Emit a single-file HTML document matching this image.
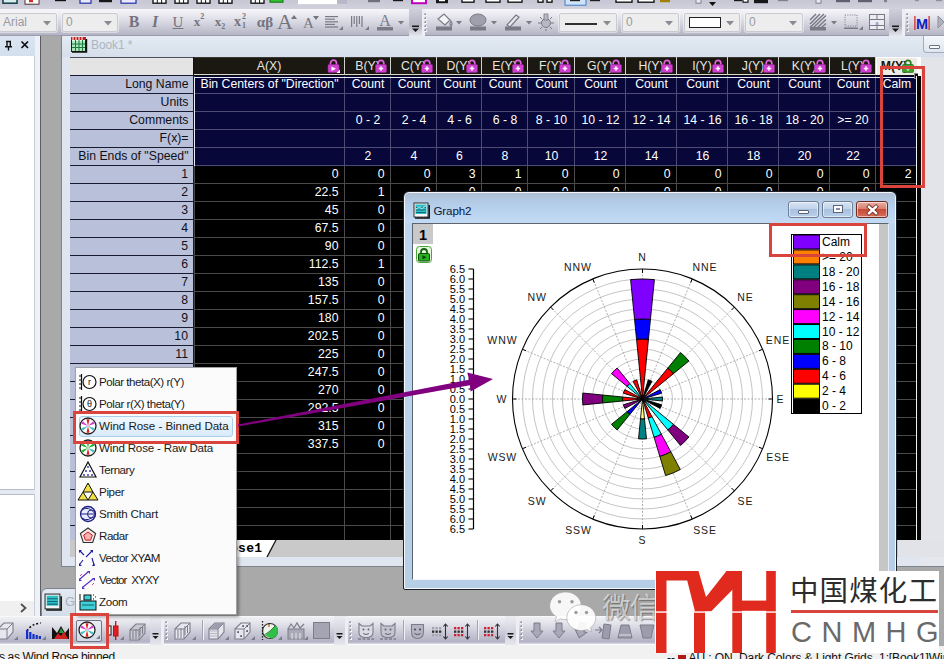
<!DOCTYPE html>
<html lang="en"><head><meta charset="utf-8"><title>Wind Rose</title>
<style>
html,body{margin:0;padding:0;}
body{width:944px;height:659px;overflow:hidden;background:#a9a9a9;font-family:"Liberation Sans",sans-serif;}
#root{position:relative;width:944px;height:659px;overflow:hidden;background:#a9a9a9;}
.abs{position:absolute;}
.abs, #root div, #root span{box-sizing:border-box;}
#root div{position:absolute;}
svg{position:absolute;overflow:visible;}
/* worksheet */
.ws{font-family:"Liberation Sans",sans-serif;font-size:12.250px;line-height:18px;white-space:nowrap;}
.rh{line-height:16.600px;background:#b9c0da;color:#101018;text-align:right;padding-right:5px;border-bottom:1px solid #1a1a30;height:18px;left:70px;width:123px;}
.cell{height:18px;line-height:16.600px;color:#fff;}
.menu-item{font-size:12px;color:#1a1a1a;white-space:nowrap;height:22px;line-height:22px;left:99px;letter-spacing:0.1px;}

</style></head>
<body>
<div id="root">
<!-- top toolbars -->
<div style="left:0;top:0;width:944px;height:9px;background:linear-gradient(#c6c6d4,#d2d2de);"></div>
<div style="left:0;top:9px;width:944px;height:27px;background:linear-gradient(#f4f4f8 0%,#e6e6ee 25%,#d0d0dc 60%,#b4b4c4 100%);border-top:1px solid #f6f6fa;border-bottom:1px solid #9c9cac;"></div>
<svg style="left:0;top:0" width="944" height="10" viewBox="0 0 944 10"><rect x="3" y="-2" width="14" height="5.2" fill="#d8ecec" stroke="#103c48" stroke-width="1.5"/><rect x="25" y="-2" width="14" height="6.2" fill="#ffffff" stroke="#503030" stroke-width="1"/><rect x="29" y="-2" width="4" height="4.2" fill="#d03020"/><rect x="55" y="-2" width="11" height="3.2" fill="#101010"/><rect x="80" y="-2" width="11" height="5.2" fill="#e8e8ff" stroke="#2030a0" stroke-width="1.2"/><rect x="99" y="-2" width="13" height="4.2" fill="#181818"/><rect x="121" y="-2" width="15" height="5.2" fill="#e8e8ff" stroke="#2030a0" stroke-width="1.2"/><rect x="153" y="-2" width="13" height="5.2" fill="#ffffff" stroke="#181818" stroke-width="1.4"/><path d="M157.3 0V3M161.6 0V3" stroke="#181818" stroke-width="1"/><rect x="175" y="-2" width="13" height="5.2" fill="#ffffff" stroke="#181818" stroke-width="1.4"/><path d="M179.3 0V3M183.6 0V3" stroke="#181818" stroke-width="1"/><rect x="197" y="-2" width="13" height="5.2" fill="#ffffff" stroke="#181818" stroke-width="1.4"/><path d="M201.3 0V3M205.6 0V3" stroke="#181818" stroke-width="1"/><rect x="219" y="-2" width="13" height="5.2" fill="#ffffff" stroke="#181818" stroke-width="1.4"/><path d="M223.3 0V3M227.6 0V3" stroke="#181818" stroke-width="1"/><rect x="251" y="-2" width="13" height="5.2" fill="#ffffff" stroke="#181818" stroke-width="1.4"/><path d="M255.3 0V3M259.6 0V3" stroke="#181818" stroke-width="1"/><rect x="270" y="-2" width="13" height="4.2" fill="#30c030" stroke="#107010" stroke-width="1"/><rect x="298" y="-2" width="48" height="6.2" fill="#ffffff"/><rect x="337" y="-2" width="10" height="6.2" fill="#b8b8c8"/><rect x="368" y="-2" width="12" height="4.2" fill="#707078"/><rect x="393" y="-2" width="10" height="3.2" fill="#181818"/><rect x="412" y="-2" width="14" height="5.2" fill="#ffffff" stroke="#c000c0" stroke-width="2"/><rect x="436" y="-2" width="12" height="5.2" fill="#181818"/><rect x="439" y="-2" width="6" height="3.2" fill="#ffffff"/><rect x="462" y="-2" width="12" height="4.2" fill="#ffffff" stroke="#181818" stroke-width="1.4"/><rect x="486" y="-2" width="14" height="4.2" fill="#ffffff" stroke="#181818" stroke-width="1.4"/><rect x="508" y="-2" width="14" height="4.2" fill="#ffffff" stroke="#181818" stroke-width="1.4"/><rect x="538" y="-2" width="5" height="4.2" fill="#ffffff" stroke="#181818" stroke-width="1.4"/><rect x="547" y="-2" width="5" height="4.2" fill="#ffffff" stroke="#181818" stroke-width="1.4"/><rect x="565" y="-2" width="21" height="7.2" fill="#cfe4f8" stroke="#3c7cd0" stroke-width="1"/><rect x="570" y="-2" width="10" height="3.2" fill="#202020"/><rect x="590" y="-2" width="10" height="3.2" fill="#202020"/><rect x="616" y="-2" width="16" height="4.2" fill="#ffffff" stroke="#181818" stroke-width="1.4"/><rect x="638" y="-2" width="16" height="4.2" fill="#ffffff" stroke="#181818" stroke-width="1.4"/><rect x="660" y="-2" width="10" height="4.2" fill="#a08000"/><rect x="696" y="-2" width="5" height="5.2" fill="#e8e8f0" stroke="#808090" stroke-width="1"/><path d="M709 2h7l-3.5 4z" fill="#101010"/><rect x="734" y="-2" width="8" height="3.2" fill="#181818"/><rect x="743" y="-2" width="5" height="4.2" fill="#ffffff" stroke="#181818" stroke-width="1.2"/><rect x="754" y="-2" width="14" height="5.2" fill="#181818"/><rect x="778" y="-2" width="10" height="3.2" fill="#808090"/><rect x="816" y="-2" width="5" height="5.2" fill="#e8e8f0" stroke="#808090" stroke-width="1"/><rect x="836" y="-2" width="14" height="4.2" fill="#606070"/><rect x="858" y="-2" width="14" height="4.2" fill="#606070"/><rect x="884" y="-2" width="3" height="4.2" fill="#808090"/><rect x="915" y="-2" width="4" height="3.2" fill="#909098"/><rect x="936" y="-2" width="6" height="3.2" fill="#909098"/></svg>
<div style="left:-1px;top:13px;width:58px;height:19px;background:#ededed;border:1px solid #c9c9d2;border-radius:2px;box-shadow:0 0 0 1px rgba(255,255,255,.45);"><span style="position:absolute;left:3px;top:1px;font-size:12px;line-height:15px;color:#9a9aa0;">Arial</span><svg style="right:5px;top:7px" width="8" height="5" viewBox="0 0 8 5"><path d="M0 0h8l-4 4.5z" fill="#8a8a92"/></svg></div>
<div style="left:62px;top:13px;width:56px;height:19px;background:#ededed;border:1px solid #c9c9d2;border-radius:2px;box-shadow:0 0 0 1px rgba(255,255,255,.45);"><span style="position:absolute;left:3px;top:1px;font-size:12px;line-height:15px;color:#9a9aa0;">0</span><svg style="right:5px;top:7px" width="8" height="5" viewBox="0 0 8 5"><path d="M0 0h8l-4 4.5z" fill="#8a8a92"/></svg></div>
<div style="left:559px;top:13px;width:58px;height:19px;background:#ededed;border:1px solid #c9c9d2;border-radius:2px;box-shadow:0 0 0 1px rgba(255,255,255,.45);"><div style="left:5px;top:9px;width:32px;height:1.500px;background:#303030;"></div><svg style="right:5px;top:7px" width="8" height="5" viewBox="0 0 8 5"><path d="M0 0h8l-4 4.5z" fill="#8a8a92"/></svg></div>
<div style="left:622px;top:13px;width:57px;height:19px;background:#ededed;border:1px solid #c9c9d2;border-radius:2px;box-shadow:0 0 0 1px rgba(255,255,255,.45);"><span style="position:absolute;left:3px;top:1px;font-size:12px;line-height:15px;color:#9a9aa0;">0</span><svg style="right:5px;top:7px" width="8" height="5" viewBox="0 0 8 5"><path d="M0 0h8l-4 4.5z" fill="#8a8a92"/></svg></div>
<div style="left:684px;top:13px;width:56px;height:19px;background:#ededed;border:1px solid #c9c9d2;border-radius:2px;box-shadow:0 0 0 1px rgba(255,255,255,.45);"><div style="left:4px;top:3px;width:32px;height:11px;border:1.500px solid #202020;background:#fff;"></div><svg style="right:5px;top:7px" width="8" height="5" viewBox="0 0 8 5"><path d="M0 0h8l-4 4.5z" fill="#8a8a92"/></svg></div>
<div style="left:745px;top:13px;width:58px;height:19px;background:#ededed;border:1px solid #c9c9d2;border-radius:2px;box-shadow:0 0 0 1px rgba(255,255,255,.45);"><span style="position:absolute;left:3px;top:1px;font-size:12px;line-height:15px;color:#9a9aa0;">0</span><svg style="right:5px;top:7px" width="8" height="5" viewBox="0 0 8 5"><path d="M0 0h8l-4 4.5z" fill="#8a8a92"/></svg></div>
<div style="left:122px;top:11px;width:24px;height:22px;text-align:center;line-height:22px;color:#74747e;font-family:'Liberation Serif',serif;font-weight:bold;font-size:16px;">B</div>
<div style="left:143px;top:11px;width:24px;height:22px;text-align:center;line-height:22px;color:#74747e;font-family:'Liberation Serif',serif;font-weight:bold;font-style:italic;font-size:16px;">I</div>
<div style="left:166px;top:11px;width:24px;height:22px;text-align:center;line-height:22px;color:#74747e;font-family:'Liberation Serif',serif;font-size:15px;text-decoration:underline;">U</div>
<div style="left:187px;top:11px;width:24px;height:22px;text-align:center;line-height:22px;color:#74747e;font-family:'Liberation Serif',serif;font-weight:bold;font-size:13px;">x<sup style="font-size:8px;vertical-align:7px;line-height:0">2</sup></div>
<div style="left:208px;top:11px;width:24px;height:22px;text-align:center;line-height:22px;color:#74747e;font-family:'Liberation Serif',serif;font-weight:bold;font-size:13px;">x<sub style="font-size:8px;vertical-align:-3px;line-height:0">2</sub></div>
<div style="left:234px;top:11px;width:20px;height:22px;line-height:22px;color:#74747e;font-family:'Liberation Serif',serif;font-weight:bold;font-size:14px;">x<span style="position:absolute;left:8px;top:-5px;font-size:8px;">2</span><span style="position:absolute;left:8px;top:4px;font-size:8px;">1</span></div>
<div style="left:253px;top:11px;width:24px;height:22px;text-align:center;line-height:22px;color:#74747e;font-family:'Liberation Serif',serif;font-weight:bold;font-size:15px;">αβ</div>
<div style="left:277px;top:9px;width:22px;height:24px;line-height:26px;color:#74747e;font-family:'Liberation Serif',serif;font-size:22px;">A<svg style="left:14px;top:6px" width="6" height="4" viewBox="0 0 6 4"><path d="M0 4h6l-3-4z" fill="#74747e"/></svg></div>
<div style="left:303px;top:11px;width:18px;height:22px;line-height:24px;color:#74747e;font-family:'Liberation Serif',serif;font-size:15px;">A<svg style="left:10px;top:5px" width="6" height="4" viewBox="0 0 6 4"><path d="M0 0h6l-3 4z" fill="#74747e"/></svg></div>
<svg style="left:0;top:9px" width="944" height="27" viewBox="0 9 944 27"><rect x="325" y="16.0" width="13" height="1.2" fill="#7a7a86"/><rect x="325" y="18.6" width="10" height="1.2" fill="#7a7a86"/><rect x="325" y="21.2" width="13" height="1.2" fill="#7a7a86"/><rect x="325" y="23.8" width="10" height="1.2" fill="#7a7a86"/><rect x="325" y="26.4" width="13" height="1.2" fill="#7a7a86"/><path d="M343 30h-4l4-4z" fill="#7a7a86"/><rect x="351.0" y="16" width="1.2" height="11" fill="#7a7a86"/><rect x="353.6" y="16" width="1.2" height="8" fill="#7a7a86"/><rect x="356.2" y="16" width="1.2" height="11" fill="#7a7a86"/><rect x="358.8" y="16" width="1.2" height="8" fill="#7a7a86"/><rect x="361.4" y="16" width="1.2" height="11" fill="#7a7a86"/><path d="M369 30h-4l4-4z" fill="#7a7a86"/><text x="385" y="26" font-family="Liberation Serif,serif" font-size="16" text-anchor="middle" fill="#7a7a86">A</text><rect x="377" y="27" width="16" height="3.5" fill="#7a7a86"/><path d="M398 21h6l-3 3.5z" fill="#7a7a86"/><defs><linearGradient id="capg" x1="0" y1="0" x2="0" y2="1"><stop offset="0" stop-color="#cfcfdc"/><stop offset=".6" stop-color="#b2b2c2"/><stop offset="1" stop-color="#e6e6ee"/></linearGradient></defs><path d="M409 9h13v27h-9q-4 0-4-5z" fill="#c4c4d2" opacity=".0"/><rect x="409" y="9" width="13" height="27" fill="url(#capg)"/><rect x="422" y="9" width="3" height="27" fill="#eeeef4"/><rect x="412" y="25.5" width="7" height="1.6" fill="#181818"/><path d="M412 28.5h7l-3.5 3.5z" fill="#181818"/><path d="M889 9h13v27h-9q-4 0-4-5z" fill="#c4c4d2" opacity=".0"/><rect x="889" y="9" width="13" height="27" fill="url(#capg)"/><rect x="902" y="9" width="3" height="27" fill="#eeeef4"/><rect x="892" y="25.5" width="7" height="1.6" fill="#181818"/><path d="M892 28.5h7l-3.5 3.5z" fill="#181818"/><rect x="425" y="14" width="2" height="2" fill="#f4f4f8"/><rect x="424.4" y="13.4" width="1.6" height="1.6" fill="#8c8c9c"/><rect x="425" y="18" width="2" height="2" fill="#f4f4f8"/><rect x="424.4" y="17.4" width="1.6" height="1.6" fill="#8c8c9c"/><rect x="425" y="22" width="2" height="2" fill="#f4f4f8"/><rect x="424.4" y="21.4" width="1.6" height="1.6" fill="#8c8c9c"/><rect x="425" y="26" width="2" height="2" fill="#f4f4f8"/><rect x="424.4" y="25.4" width="1.6" height="1.6" fill="#8c8c9c"/><rect x="425" y="30" width="2" height="2" fill="#f4f4f8"/><rect x="424.4" y="29.4" width="1.6" height="1.6" fill="#8c8c9c"/><rect x="907" y="14" width="2" height="2" fill="#f4f4f8"/><rect x="906.4" y="13.4" width="1.6" height="1.6" fill="#8c8c9c"/><rect x="907" y="18" width="2" height="2" fill="#f4f4f8"/><rect x="906.4" y="17.4" width="1.6" height="1.6" fill="#8c8c9c"/><rect x="907" y="22" width="2" height="2" fill="#f4f4f8"/><rect x="906.4" y="21.4" width="1.6" height="1.6" fill="#8c8c9c"/><rect x="907" y="26" width="2" height="2" fill="#f4f4f8"/><rect x="906.4" y="25.4" width="1.6" height="1.6" fill="#8c8c9c"/><rect x="907" y="30" width="2" height="2" fill="#f4f4f8"/><rect x="906.4" y="29.4" width="1.6" height="1.6" fill="#8c8c9c"/><path d="M438 19l6-5 6 6-5 5zM451 21q2 3 0 5q-2-2 0-5z" fill="#f4f4f8" stroke="#7a7a86" stroke-width="1.2"/><rect x="436" y="26.5" width="16" height="4" fill="#7a7a86"/><path d="M456 21h6l-3 3.5z" fill="#7a7a86"/><ellipse cx="478" cy="20" rx="8" ry="6" fill="#a0a0ac" stroke="#7a7a86"/><rect x="470" y="26.5" width="16" height="4" fill="#7a7a86"/><path d="M491 21h6l-3 3.5z" fill="#7a7a86"/><path d="M507 25l9-10 3 2-9 10z" fill="#e8e8ee" stroke="#7a7a86" stroke-width="1.2"/><rect x="505" y="26.5" width="16" height="4" fill="#7a7a86"/><path d="M526 21h6l-3 3.5z" fill="#7a7a86"/><circle cx="546" cy="23" r="4.5" fill="#b8b8c4" stroke="#7a7a86"/><rect x="544" y="14" width="4" height="6" fill="#b8b8c4" stroke="#7a7a86" stroke-width=".8"/><path d="M538 23h3M551 23h3M540 17l2 2M552 17l-2 2M540 29l2-2M552 29l-2-2M546 29v2" stroke="#7a7a86" stroke-width="1"/><g stroke="#7a7a86" stroke-width="1.500"><path d="M810 20l6-6M810 24l10-10M810 27.500l14-13.500M813.500 27.500l12.500-12M817.500 27.500l8.500-8M821.500 27.500l4.500-4"/></g><rect x="810" y="27" width="16" height="3.5" fill="#7a7a86"/><path d="M831 21h6l-3 3.5z" fill="#7a7a86"/><rect x="845" y="15" width="12" height="11" fill="none" stroke="#7a7a86" stroke-dasharray="1 1.4"/><rect x="844" y="27.5" width="14" height="1.5" fill="#7a7a86"/><path d="M863 30h-4l4-4z" fill="#7a7a86"/><rect x="869.5" y="14.5" width="15" height="15" fill="#ececf2" stroke="#7a7a86"/><path d="M869 19.5h16M869 25.500h16M877 14v5M877 26v4" stroke="#7a7a86"/><text x="877" y="25" font-size="6" text-anchor="middle" fill="#7a7a86" font-family="Liberation Sans,sans-serif">a</text><text x="922" y="29" font-family="Liberation Sans,sans-serif" font-weight="bold" font-size="14.500" text-anchor="middle" fill="#1020c0">M</text><rect x="914.300" y="16" width="1.2" height="14" fill="#d02020"/><rect x="928.5" y="16" width="1.2" height="14" fill="#d02020"/><path d="M938 16l6 6-6 6z" fill="#b0b0bc" stroke="#9090a0"/></svg>
<!-- left panel -->
<div style="left:0;top:36px;width:41px;height:581px;background:#e4e9f2;"></div>
<div style="left:0;top:36px;width:36px;height:21px;background:linear-gradient(#dbe5f1,#d3dfee);"></div>
<div style="left:35px;top:36px;width:6px;height:581px;background:#eff1f8;border-right:1px solid #5c5c60;"></div>
<svg style="left:0;top:36px" width="36" height="20" viewBox="0 0 36 20"><path d="M6 5.500h5M7 5.500v5M10.300 5.500v5.500M5 10.700h7M8.500 11v3.500" stroke="#101010" stroke-width="1.400" fill="none"/><path d="M21.500 5.500l6.500 6.500M28 5.500l-6.500 6.500" stroke="#101010" stroke-width="1.700"/></svg>
<div style="left:0;top:56px;width:35px;height:434px;background:#ffffff;border-right:1px solid #c8ccd6;border-bottom:1px solid #b8bcc8;"></div>
<div style="left:0;top:494px;width:35px;height:107px;background:#ffffff;border-right:1px solid #c8ccd6;border-top:1px solid #b8bcc8;"></div>
<div style="left:0;top:601px;width:35px;height:16px;background:#f0f0f0;border-right:1px solid #c8ccd6;"></div>
<svg style="left:19px;top:602px" width="10" height="12" viewBox="0 0 10 12"><path d="M2 2l4.500 4-4.500 4" stroke="#505050" stroke-width="1.800" fill="none"/></svg>
<!-- Book1 window -->
<div style="left:61px;top:36px;width:890px;height:531px;background:#dfe6ef;border:1px solid #7c8490;border-top:none;"></div>
<div style="left:62px;top:36px;width:882px;height:21px;background:linear-gradient(#e4ebf3,#d5deea);"></div>
<svg style="left:70px;top:36px" width="17" height="17" viewBox="0 0 17 17"><rect x="1.5" y="1.5" width="14" height="14" fill="#e8fff0" stroke="#202020"/><rect x="1" y="1" width="15" height="3" fill="#c02020"/><path d="M3 1v3M6 1v3M9 1v3M12 1v3" stroke="#fff" stroke-width="1"/><rect x="2" y="5" width="13" height="10" fill="#a8e8b8"/><path d="M2 8h13M2 11.500h13M5.500 4v11M9 4v11M12.500 4v11" stroke="#207840" stroke-width="1"/><path d="M2 16h14.500V3" stroke="#101010" stroke-width="1.400" fill="none"/></svg>
<div style="left:91px;top:37px;font-size:12px;line-height:16px;color:#adb5c0;letter-spacing:-.1px;">Book1 *</div>
<div style="left:923px;top:36px;width:24px;height:17px;background:linear-gradient(#f4f7fb,#dfe6ef);border:1px solid #a4acb8;border-top:none;border-radius:0 0 0 4px;"></div>
<div style="left:929px;top:45px;width:11px;height:4px;background:#fafcfe;border:1px solid #6c7480;border-radius:1px;"></div>
<div class="ws" style="left:70px;top:57px;width:851px;height:483px;background:#000;overflow:hidden;">
<div style="left:124px;top:19px;width:724px;height:90px;background:#07073a;"></div>
<div style="left:0;top:0;width:124px;height:19px;background:#e4e4e4;border-bottom:1px solid #1a1a30;border-top:1px solid #50505c;"></div>
<div style="left:124px;top:0;width:724px;height:18px;background:#1b1711;border-bottom:1px solid #d8d8d0;border-top:1px solid #3a3630;"></div>
<div style="left:124px;top:0;width:151px;height:19px;line-height:19px;color:#e8e6e0;border-right:1px solid #d0d0d0;text-align:center;">A(X)<svg style="right:4px;top:2px" width="13" height="14" viewBox="0 0 13 14"><path d="M3.500 6V4.200a3 3 0 0 1 6 0V6" fill="none" stroke="#e060e0" stroke-width="1.700"/><rect x="1" y="5.500" width="11" height="8" rx="1" fill="#d040d0" stroke="#902890" stroke-width=".6"/><path d="M4.500 7.500l4.500 2.200-4.500 2.200z" fill="#fff"/><path d="M13 14h-3.500l3.500-3.500z" fill="#fff"/></svg></div>
<div style="left:275px;top:0;width:46px;height:19px;line-height:19px;color:#e8e6e0;border-right:1px solid #d0d0d0;text-align:center;">B(Y)<svg style="right:3px;top:2px" width="12" height="14" viewBox="0 0 12 14"><path d="M3.200 6V4.200a2.800 2.800 0 0 1 5.600 0V6" fill="none" stroke="#e060e0" stroke-width="1.700"/><rect x=".5" y="5.500" width="11" height="8" rx="1" fill="#d040d0" stroke="#902890" stroke-width=".6"/><path d="M6 7.300v4.400M3.800 9.500h4.400" stroke="#fff" stroke-width="1.400"/></svg></div>
<div style="left:321px;top:0;width:46px;height:19px;line-height:19px;color:#e8e6e0;border-right:1px solid #d0d0d0;text-align:center;">C(Y)<svg style="right:3px;top:2px" width="12" height="14" viewBox="0 0 12 14"><path d="M3.200 6V4.200a2.800 2.800 0 0 1 5.600 0V6" fill="none" stroke="#e060e0" stroke-width="1.700"/><rect x=".5" y="5.500" width="11" height="8" rx="1" fill="#d040d0" stroke="#902890" stroke-width=".6"/><path d="M6 7.300v4.400M3.800 9.500h4.400" stroke="#fff" stroke-width="1.400"/></svg></div>
<div style="left:367px;top:0;width:45px;height:19px;line-height:19px;color:#e8e6e0;border-right:1px solid #d0d0d0;text-align:center;">D(Y)<svg style="right:3px;top:2px" width="12" height="14" viewBox="0 0 12 14"><path d="M3.200 6V4.200a2.800 2.800 0 0 1 5.600 0V6" fill="none" stroke="#e060e0" stroke-width="1.700"/><rect x=".5" y="5.500" width="11" height="8" rx="1" fill="#d040d0" stroke="#902890" stroke-width=".6"/><path d="M6 7.300v4.400M3.800 9.500h4.400" stroke="#fff" stroke-width="1.400"/></svg></div>
<div style="left:412px;top:0;width:46px;height:19px;line-height:19px;color:#e8e6e0;border-right:1px solid #d0d0d0;text-align:center;">E(Y)<svg style="right:3px;top:2px" width="12" height="14" viewBox="0 0 12 14"><path d="M3.200 6V4.200a2.800 2.800 0 0 1 5.600 0V6" fill="none" stroke="#e060e0" stroke-width="1.700"/><rect x=".5" y="5.500" width="11" height="8" rx="1" fill="#d040d0" stroke="#902890" stroke-width=".6"/><path d="M6 7.300v4.400M3.800 9.500h4.400" stroke="#fff" stroke-width="1.400"/></svg></div>
<div style="left:458px;top:0;width:47px;height:19px;line-height:19px;color:#e8e6e0;border-right:1px solid #d0d0d0;text-align:center;">F(Y)<svg style="right:3px;top:2px" width="12" height="14" viewBox="0 0 12 14"><path d="M3.200 6V4.200a2.800 2.800 0 0 1 5.600 0V6" fill="none" stroke="#e060e0" stroke-width="1.700"/><rect x=".5" y="5.500" width="11" height="8" rx="1" fill="#d040d0" stroke="#902890" stroke-width=".6"/><path d="M6 7.300v4.400M3.800 9.500h4.400" stroke="#fff" stroke-width="1.400"/></svg></div>
<div style="left:505px;top:0;width:51px;height:19px;line-height:19px;color:#e8e6e0;border-right:1px solid #d0d0d0;text-align:center;">G(Y)<svg style="right:3px;top:2px" width="12" height="14" viewBox="0 0 12 14"><path d="M3.200 6V4.200a2.800 2.800 0 0 1 5.600 0V6" fill="none" stroke="#e060e0" stroke-width="1.700"/><rect x=".5" y="5.500" width="11" height="8" rx="1" fill="#d040d0" stroke="#902890" stroke-width=".6"/><path d="M6 7.300v4.400M3.800 9.500h4.400" stroke="#fff" stroke-width="1.400"/></svg></div>
<div style="left:556px;top:0;width:51px;height:19px;line-height:19px;color:#e8e6e0;border-right:1px solid #d0d0d0;text-align:center;">H(Y)<svg style="right:3px;top:2px" width="12" height="14" viewBox="0 0 12 14"><path d="M3.200 6V4.200a2.800 2.800 0 0 1 5.600 0V6" fill="none" stroke="#e060e0" stroke-width="1.700"/><rect x=".5" y="5.500" width="11" height="8" rx="1" fill="#d040d0" stroke="#902890" stroke-width=".6"/><path d="M6 7.300v4.400M3.800 9.500h4.400" stroke="#fff" stroke-width="1.400"/></svg></div>
<div style="left:607px;top:0;width:51px;height:19px;line-height:19px;color:#e8e6e0;border-right:1px solid #d0d0d0;text-align:center;">I(Y)<svg style="right:3px;top:2px" width="12" height="14" viewBox="0 0 12 14"><path d="M3.200 6V4.200a2.800 2.800 0 0 1 5.600 0V6" fill="none" stroke="#e060e0" stroke-width="1.700"/><rect x=".5" y="5.500" width="11" height="8" rx="1" fill="#d040d0" stroke="#902890" stroke-width=".6"/><path d="M6 7.300v4.400M3.800 9.500h4.400" stroke="#fff" stroke-width="1.400"/></svg></div>
<div style="left:658px;top:0;width:51px;height:19px;line-height:19px;color:#e8e6e0;border-right:1px solid #d0d0d0;text-align:center;">J(Y)<svg style="right:3px;top:2px" width="12" height="14" viewBox="0 0 12 14"><path d="M3.200 6V4.200a2.800 2.800 0 0 1 5.600 0V6" fill="none" stroke="#e060e0" stroke-width="1.700"/><rect x=".5" y="5.500" width="11" height="8" rx="1" fill="#d040d0" stroke="#902890" stroke-width=".6"/><path d="M6 7.300v4.400M3.800 9.500h4.400" stroke="#fff" stroke-width="1.400"/></svg></div>
<div style="left:709px;top:0;width:51px;height:19px;line-height:19px;color:#e8e6e0;border-right:1px solid #d0d0d0;text-align:center;">K(Y)<svg style="right:3px;top:2px" width="12" height="14" viewBox="0 0 12 14"><path d="M3.200 6V4.200a2.800 2.800 0 0 1 5.600 0V6" fill="none" stroke="#e060e0" stroke-width="1.700"/><rect x=".5" y="5.500" width="11" height="8" rx="1" fill="#d040d0" stroke="#902890" stroke-width=".6"/><path d="M6 7.300v4.400M3.800 9.500h4.400" stroke="#fff" stroke-width="1.400"/></svg></div>
<div style="left:760px;top:0;width:46px;height:19px;line-height:19px;color:#e8e6e0;border-right:1px solid #d0d0d0;text-align:center;">L(Y)<svg style="right:3px;top:2px" width="12" height="14" viewBox="0 0 12 14"><path d="M3.200 6V4.200a2.800 2.800 0 0 1 5.600 0V6" fill="none" stroke="#e060e0" stroke-width="1.700"/><rect x=".5" y="5.500" width="11" height="8" rx="1" fill="#d040d0" stroke="#902890" stroke-width=".6"/><path d="M6 7.300v4.400M3.800 9.500h4.400" stroke="#fff" stroke-width="1.400"/></svg></div>
<div style="left:806px;top:0;width:42px;height:19px;line-height:19px;background:#ecebe4;border:1px solid #fff;color:#1b1711;font-weight:bold;text-align:center;"><span style="position:relative;top:-1px;left:-3px;">M(Y)</span><svg style="right:3px;top:1px" width="12" height="14" viewBox="0 0 12 14"><path d="M3.200 6V4.200a2.800 2.800 0 0 1 5.600 0V6" fill="none" stroke="#2c7c20" stroke-width="1.700"/><rect x=".5" y="5.500" width="11" height="8" rx="1" fill="#3aa028" stroke="#1c5c10" stroke-width=".6"/><path d="M6 7.300v4.400M3.800 9.500h4.400" stroke="#d8f0d0" stroke-width="1.400"/></svg></div>
<div class="rh" style="left:0;top:19px;width:124px;padding-right:5.5px;">Long Name</div>
<div class="rh" style="left:0;top:37px;width:124px;padding-right:5.5px;">Units</div>
<div class="rh" style="left:0;top:55px;width:124px;padding-right:5.5px;">Comments</div>
<div class="rh" style="left:0;top:73px;width:124px;padding-right:5.5px;">F(x)=</div>
<div class="rh" style="left:0;top:91px;width:124px;padding-right:5.5px;">Bin Ends of "Speed"</div>
<div class="rh" style="left:0;top:109px;width:124px;padding-right:6px;">1</div>
<div class="rh" style="left:0;top:127px;width:124px;padding-right:6px;">2</div>
<div class="rh" style="left:0;top:145px;width:124px;padding-right:6px;">3</div>
<div class="rh" style="left:0;top:163px;width:124px;padding-right:6px;">4</div>
<div class="rh" style="left:0;top:181px;width:124px;padding-right:6px;">5</div>
<div class="rh" style="left:0;top:199px;width:124px;padding-right:6px;">6</div>
<div class="rh" style="left:0;top:217px;width:124px;padding-right:6px;">7</div>
<div class="rh" style="left:0;top:235px;width:124px;padding-right:6px;">8</div>
<div class="rh" style="left:0;top:253px;width:124px;padding-right:6px;">9</div>
<div class="rh" style="left:0;top:271px;width:124px;padding-right:6px;">10</div>
<div class="rh" style="left:0;top:289px;width:124px;padding-right:6px;">11</div>
<div class="rh" style="left:0;top:307px;width:124px;padding-right:6px;">12</div>
<div class="rh" style="left:0;top:325px;width:124px;padding-right:6px;">13</div>
<div class="rh" style="left:0;top:343px;width:124px;padding-right:6px;">14</div>
<div class="rh" style="left:0;top:361px;width:124px;padding-right:6px;">15</div>
<div class="rh" style="left:0;top:379px;width:124px;padding-right:6px;">16</div>
<div class="rh" style="left:0;top:397px;width:124px;padding-right:6px;">17</div>
<div class="rh" style="left:0;top:415px;width:124px;padding-right:6px;">18</div>
<div class="rh" style="left:0;top:433px;width:124px;padding-right:6px;">19</div>
<div class="rh" style="left:0;top:451px;width:124px;padding-right:6px;">20</div>
<div class="rh" style="left:0;top:469px;width:124px;padding-right:6px;">21</div>
<div style="left:123px;top:19px;width:1px;height:470px;background:#1a1a30;"></div>
<svg style="left:124px;top:19px" width="724" height="470" viewBox="124 18 724 470" shape-rendering="crispEdges"><path d="M124 35.5H848" stroke="#4c4c74" stroke-width="1"/><path d="M124 53.5H848" stroke="#4c4c74" stroke-width="1"/><path d="M124 71.5H848" stroke="#4c4c74" stroke-width="1"/><path d="M124 89.5H848" stroke="#4c4c74" stroke-width="1"/><path d="M124 107.5H848" stroke="#4c4c74" stroke-width="1"/><path d="M124 125.5H848" stroke="#4a4a4a" stroke-width="1"/><path d="M124 143.5H848" stroke="#4a4a4a" stroke-width="1"/><path d="M124 161.5H848" stroke="#4a4a4a" stroke-width="1"/><path d="M124 179.5H848" stroke="#4a4a4a" stroke-width="1"/><path d="M124 197.5H848" stroke="#4a4a4a" stroke-width="1"/><path d="M124 215.5H848" stroke="#4a4a4a" stroke-width="1"/><path d="M124 233.5H848" stroke="#4a4a4a" stroke-width="1"/><path d="M124 251.5H848" stroke="#4a4a4a" stroke-width="1"/><path d="M124 269.5H848" stroke="#4a4a4a" stroke-width="1"/><path d="M124 287.5H848" stroke="#4a4a4a" stroke-width="1"/><path d="M124 305.5H848" stroke="#4a4a4a" stroke-width="1"/><path d="M124 323.5H848" stroke="#4a4a4a" stroke-width="1"/><path d="M124 341.5H848" stroke="#4a4a4a" stroke-width="1"/><path d="M124 359.5H848" stroke="#4a4a4a" stroke-width="1"/><path d="M124 377.5H848" stroke="#4a4a4a" stroke-width="1"/><path d="M124 395.5H848" stroke="#4a4a4a" stroke-width="1"/><path d="M124 413.5H848" stroke="#4a4a4a" stroke-width="1"/><path d="M124 431.5H848" stroke="#4a4a4a" stroke-width="1"/><path d="M124 449.5H848" stroke="#4a4a4a" stroke-width="1"/><path d="M124 467.5H848" stroke="#4a4a4a" stroke-width="1"/><path d="M124 485.5H848" stroke="#4a4a4a" stroke-width="1"/><path d="M274.5 18V108" stroke="#4c4c74" stroke-width="1"/><path d="M274.5 108V488" stroke="#4a4a4a" stroke-width="1"/><path d="M320.5 18V108" stroke="#4c4c74" stroke-width="1"/><path d="M320.5 108V488" stroke="#4a4a4a" stroke-width="1"/><path d="M366.5 18V108" stroke="#4c4c74" stroke-width="1"/><path d="M366.5 108V488" stroke="#4a4a4a" stroke-width="1"/><path d="M411.5 18V108" stroke="#4c4c74" stroke-width="1"/><path d="M411.5 108V488" stroke="#4a4a4a" stroke-width="1"/><path d="M457.5 18V108" stroke="#4c4c74" stroke-width="1"/><path d="M457.5 108V488" stroke="#4a4a4a" stroke-width="1"/><path d="M504.5 18V108" stroke="#4c4c74" stroke-width="1"/><path d="M504.5 108V488" stroke="#4a4a4a" stroke-width="1"/><path d="M555.5 18V108" stroke="#4c4c74" stroke-width="1"/><path d="M555.5 108V488" stroke="#4a4a4a" stroke-width="1"/><path d="M606.5 18V108" stroke="#4c4c74" stroke-width="1"/><path d="M606.5 108V488" stroke="#4a4a4a" stroke-width="1"/><path d="M657.5 18V108" stroke="#4c4c74" stroke-width="1"/><path d="M657.5 108V488" stroke="#4a4a4a" stroke-width="1"/><path d="M708.5 18V108" stroke="#4c4c74" stroke-width="1"/><path d="M708.5 108V488" stroke="#4a4a4a" stroke-width="1"/><path d="M759.5 18V108" stroke="#4c4c74" stroke-width="1"/><path d="M759.5 108V488" stroke="#4a4a4a" stroke-width="1"/><path d="M805.5 18V108" stroke="#4c4c74" stroke-width="1"/><path d="M805.5 108V488" stroke="#4a4a4a" stroke-width="1"/><path d="M847.5 18V108" stroke="#4c4c74" stroke-width="1"/><path d="M847.5 108V488" stroke="#4a4a4a" stroke-width="1"/><path d="M124.500 18V488" stroke="#4a4a4a"/></svg>
<div style="left:123px;top:0;width:1px;height:19px;background:#101010;"></div><div style="left:124px;top:18px;width:724px;height:1px;background:#0c0c10;"></div><div style="left:124px;top:20px;width:724px;height:1px;background:#e8e8f0;"></div><div style="left:124px;top:20px;width:1px;height:89px;background:#e8e8f0;"></div>
<div class="cell" style="left:124px;top:19px;width:151px;text-align:center;">Bin Centers of "Direction"</div><div class="cell" style="left:275px;top:19px;width:46px;text-align:center;">Count</div><div class="cell" style="left:321px;top:19px;width:46px;text-align:center;">Count</div><div class="cell" style="left:367px;top:19px;width:45px;text-align:center;">Count</div><div class="cell" style="left:412px;top:19px;width:46px;text-align:center;">Count</div><div class="cell" style="left:458px;top:19px;width:47px;text-align:center;">Count</div><div class="cell" style="left:505px;top:19px;width:51px;text-align:center;">Count</div><div class="cell" style="left:556px;top:19px;width:51px;text-align:center;">Count</div><div class="cell" style="left:607px;top:19px;width:51px;text-align:center;">Count</div><div class="cell" style="left:658px;top:19px;width:51px;text-align:center;">Count</div><div class="cell" style="left:709px;top:19px;width:51px;text-align:center;">Count</div><div class="cell" style="left:760px;top:19px;width:46px;text-align:center;">Count</div><div class="cell" style="left:806px;top:19px;width:42px;text-align:center;">Calm</div><div class="cell" style="left:275px;top:55px;width:46px;text-align:center;">0 - 2</div><div class="cell" style="left:321px;top:55px;width:46px;text-align:center;">2 - 4</div><div class="cell" style="left:367px;top:55px;width:45px;text-align:center;">4 - 6</div><div class="cell" style="left:412px;top:55px;width:46px;text-align:center;">6 - 8</div><div class="cell" style="left:458px;top:55px;width:47px;text-align:center;">8 - 10</div><div class="cell" style="left:505px;top:55px;width:51px;text-align:center;">10 - 12</div><div class="cell" style="left:556px;top:55px;width:51px;text-align:center;">12 - 14</div><div class="cell" style="left:607px;top:55px;width:51px;text-align:center;">14 - 16</div><div class="cell" style="left:658px;top:55px;width:51px;text-align:center;">16 - 18</div><div class="cell" style="left:709px;top:55px;width:51px;text-align:center;">18 - 20</div><div class="cell" style="left:760px;top:55px;width:46px;text-align:center;">&gt;= 20</div><div class="cell" style="left:275px;top:91px;width:46px;text-align:center;">2</div><div class="cell" style="left:321px;top:91px;width:46px;text-align:center;">4</div><div class="cell" style="left:367px;top:91px;width:45px;text-align:center;">6</div><div class="cell" style="left:412px;top:91px;width:46px;text-align:center;">8</div><div class="cell" style="left:458px;top:91px;width:47px;text-align:center;">10</div><div class="cell" style="left:505px;top:91px;width:51px;text-align:center;">12</div><div class="cell" style="left:556px;top:91px;width:51px;text-align:center;">14</div><div class="cell" style="left:607px;top:91px;width:51px;text-align:center;">16</div><div class="cell" style="left:658px;top:91px;width:51px;text-align:center;">18</div><div class="cell" style="left:709px;top:91px;width:51px;text-align:center;">20</div><div class="cell" style="left:760px;top:91px;width:46px;text-align:center;">22</div>
<div class="cell" style="left:124px;top:109px;width:144.5px;text-align:right;">0</div><div class="cell" style="left:275px;top:109px;width:39.5px;text-align:right;">0</div><div class="cell" style="left:321px;top:109px;width:39.5px;text-align:right;">0</div><div class="cell" style="left:367px;top:109px;width:38.5px;text-align:right;">3</div><div class="cell" style="left:412px;top:109px;width:39.5px;text-align:right;">1</div><div class="cell" style="left:458px;top:109px;width:40.5px;text-align:right;">0</div><div class="cell" style="left:505px;top:109px;width:44.5px;text-align:right;">0</div><div class="cell" style="left:556px;top:109px;width:44.5px;text-align:right;">0</div><div class="cell" style="left:607px;top:109px;width:44.5px;text-align:right;">0</div><div class="cell" style="left:658px;top:109px;width:44.5px;text-align:right;">0</div><div class="cell" style="left:709px;top:109px;width:44.5px;text-align:right;">0</div><div class="cell" style="left:760px;top:109px;width:39.5px;text-align:right;">0</div><div class="cell" style="left:806px;top:109px;width:35.5px;text-align:right;">2</div>
<div class="cell" style="left:124px;top:127px;width:144.5px;text-align:right;">22.5</div><div class="cell" style="left:275px;top:127px;width:39.5px;text-align:right;">1</div><div class="cell" style="left:321px;top:127px;width:39.5px;text-align:right;">0</div><div class="cell" style="left:367px;top:127px;width:38.5px;text-align:right;">0</div><div class="cell" style="left:412px;top:127px;width:39.5px;text-align:right;">0</div><div class="cell" style="left:458px;top:127px;width:40.5px;text-align:right;">0</div><div class="cell" style="left:505px;top:127px;width:44.5px;text-align:right;">0</div><div class="cell" style="left:556px;top:127px;width:44.5px;text-align:right;">0</div><div class="cell" style="left:607px;top:127px;width:44.5px;text-align:right;">0</div><div class="cell" style="left:658px;top:127px;width:44.5px;text-align:right;">0</div><div class="cell" style="left:709px;top:127px;width:44.5px;text-align:right;">0</div><div class="cell" style="left:760px;top:127px;width:39.5px;text-align:right;">0</div>
<div class="cell" style="left:124px;top:145px;width:144.5px;text-align:right;">45</div><div class="cell" style="left:275px;top:145px;width:39.5px;text-align:right;">0</div><div class="cell" style="left:321px;top:145px;width:39.5px;text-align:right;">0</div><div class="cell" style="left:367px;top:145px;width:38.5px;text-align:right;">2</div><div class="cell" style="left:412px;top:145px;width:39.5px;text-align:right;">0</div><div class="cell" style="left:458px;top:145px;width:40.5px;text-align:right;">1</div><div class="cell" style="left:505px;top:145px;width:44.5px;text-align:right;">0</div><div class="cell" style="left:556px;top:145px;width:44.5px;text-align:right;">0</div><div class="cell" style="left:607px;top:145px;width:44.5px;text-align:right;">0</div><div class="cell" style="left:658px;top:145px;width:44.5px;text-align:right;">0</div><div class="cell" style="left:709px;top:145px;width:44.5px;text-align:right;">0</div><div class="cell" style="left:760px;top:145px;width:39.5px;text-align:right;">0</div>
<div class="cell" style="left:124px;top:163px;width:144.5px;text-align:right;">67.5</div><div class="cell" style="left:275px;top:163px;width:39.5px;text-align:right;">0</div><div class="cell" style="left:321px;top:163px;width:39.5px;text-align:right;">0</div><div class="cell" style="left:367px;top:163px;width:38.5px;text-align:right;">0</div><div class="cell" style="left:412px;top:163px;width:39.5px;text-align:right;">1</div><div class="cell" style="left:458px;top:163px;width:40.5px;text-align:right;">0</div><div class="cell" style="left:505px;top:163px;width:44.5px;text-align:right;">0</div><div class="cell" style="left:556px;top:163px;width:44.5px;text-align:right;">0</div><div class="cell" style="left:607px;top:163px;width:44.5px;text-align:right;">0</div><div class="cell" style="left:658px;top:163px;width:44.5px;text-align:right;">0</div><div class="cell" style="left:709px;top:163px;width:44.5px;text-align:right;">0</div><div class="cell" style="left:760px;top:163px;width:39.5px;text-align:right;">0</div>
<div class="cell" style="left:124px;top:181px;width:144.5px;text-align:right;">90</div><div class="cell" style="left:275px;top:181px;width:39.5px;text-align:right;">0</div><div class="cell" style="left:321px;top:181px;width:39.5px;text-align:right;">0</div><div class="cell" style="left:367px;top:181px;width:38.5px;text-align:right;">0</div><div class="cell" style="left:412px;top:181px;width:39.5px;text-align:right;">0</div><div class="cell" style="left:458px;top:181px;width:40.5px;text-align:right;">0</div><div class="cell" style="left:505px;top:181px;width:44.5px;text-align:right;">0</div><div class="cell" style="left:556px;top:181px;width:44.5px;text-align:right;">0</div><div class="cell" style="left:607px;top:181px;width:44.5px;text-align:right;">0</div><div class="cell" style="left:658px;top:181px;width:44.5px;text-align:right;">0</div><div class="cell" style="left:709px;top:181px;width:44.5px;text-align:right;">1</div><div class="cell" style="left:760px;top:181px;width:39.5px;text-align:right;">0</div>
<div class="cell" style="left:124px;top:199px;width:144.5px;text-align:right;">112.5</div><div class="cell" style="left:275px;top:199px;width:39.5px;text-align:right;">1</div><div class="cell" style="left:321px;top:199px;width:39.5px;text-align:right;">0</div><div class="cell" style="left:367px;top:199px;width:38.5px;text-align:right;">0</div><div class="cell" style="left:412px;top:199px;width:39.5px;text-align:right;">0</div><div class="cell" style="left:458px;top:199px;width:40.5px;text-align:right;">0</div><div class="cell" style="left:505px;top:199px;width:44.5px;text-align:right;">0</div><div class="cell" style="left:556px;top:199px;width:44.5px;text-align:right;">0</div><div class="cell" style="left:607px;top:199px;width:44.5px;text-align:right;">0</div><div class="cell" style="left:658px;top:199px;width:44.5px;text-align:right;">0</div><div class="cell" style="left:709px;top:199px;width:44.5px;text-align:right;">0</div><div class="cell" style="left:760px;top:199px;width:39.5px;text-align:right;">0</div>
<div class="cell" style="left:124px;top:217px;width:144.5px;text-align:right;">135</div><div class="cell" style="left:275px;top:217px;width:39.5px;text-align:right;">0</div><div class="cell" style="left:321px;top:217px;width:39.5px;text-align:right;">0</div><div class="cell" style="left:367px;top:217px;width:38.5px;text-align:right;">0</div><div class="cell" style="left:412px;top:217px;width:39.5px;text-align:right;">0</div><div class="cell" style="left:458px;top:217px;width:40.5px;text-align:right;">0</div><div class="cell" style="left:505px;top:217px;width:44.5px;text-align:right;">2</div><div class="cell" style="left:556px;top:217px;width:44.5px;text-align:right;">0</div><div class="cell" style="left:607px;top:217px;width:44.5px;text-align:right;">0</div><div class="cell" style="left:658px;top:217px;width:44.5px;text-align:right;">1</div><div class="cell" style="left:709px;top:217px;width:44.5px;text-align:right;">0</div><div class="cell" style="left:760px;top:217px;width:39.5px;text-align:right;">0</div>
<div class="cell" style="left:124px;top:235px;width:144.5px;text-align:right;">157.5</div><div class="cell" style="left:275px;top:235px;width:39.5px;text-align:right;">0</div><div class="cell" style="left:321px;top:235px;width:39.5px;text-align:right;">0</div><div class="cell" style="left:367px;top:235px;width:38.5px;text-align:right;">1</div><div class="cell" style="left:412px;top:235px;width:39.5px;text-align:right;">0</div><div class="cell" style="left:458px;top:235px;width:40.5px;text-align:right;">0</div><div class="cell" style="left:505px;top:235px;width:44.5px;text-align:right;">1</div><div class="cell" style="left:556px;top:235px;width:44.5px;text-align:right;">1</div><div class="cell" style="left:607px;top:235px;width:44.5px;text-align:right;">1</div><div class="cell" style="left:658px;top:235px;width:44.5px;text-align:right;">0</div><div class="cell" style="left:709px;top:235px;width:44.5px;text-align:right;">0</div><div class="cell" style="left:760px;top:235px;width:39.5px;text-align:right;">0</div>
<div class="cell" style="left:124px;top:253px;width:144.5px;text-align:right;">180</div><div class="cell" style="left:275px;top:253px;width:39.5px;text-align:right;">0</div><div class="cell" style="left:321px;top:253px;width:39.5px;text-align:right;">1</div><div class="cell" style="left:367px;top:253px;width:38.5px;text-align:right;">0</div><div class="cell" style="left:412px;top:253px;width:39.5px;text-align:right;">0</div><div class="cell" style="left:458px;top:253px;width:40.5px;text-align:right;">0</div><div class="cell" style="left:505px;top:253px;width:44.5px;text-align:right;">0</div><div class="cell" style="left:556px;top:253px;width:44.5px;text-align:right;">0</div><div class="cell" style="left:607px;top:253px;width:44.5px;text-align:right;">0</div><div class="cell" style="left:658px;top:253px;width:44.5px;text-align:right;">0</div><div class="cell" style="left:709px;top:253px;width:44.5px;text-align:right;">1</div><div class="cell" style="left:760px;top:253px;width:39.5px;text-align:right;">0</div>
<div class="cell" style="left:124px;top:271px;width:144.5px;text-align:right;">202.5</div><div class="cell" style="left:275px;top:271px;width:39.5px;text-align:right;">0</div><div class="cell" style="left:321px;top:271px;width:39.5px;text-align:right;">0</div><div class="cell" style="left:367px;top:271px;width:38.5px;text-align:right;">0</div><div class="cell" style="left:412px;top:271px;width:39.5px;text-align:right;">0</div><div class="cell" style="left:458px;top:271px;width:40.5px;text-align:right;">0</div><div class="cell" style="left:505px;top:271px;width:44.5px;text-align:right;">0</div><div class="cell" style="left:556px;top:271px;width:44.5px;text-align:right;">0</div><div class="cell" style="left:607px;top:271px;width:44.5px;text-align:right;">0</div><div class="cell" style="left:658px;top:271px;width:44.5px;text-align:right;">0</div><div class="cell" style="left:709px;top:271px;width:44.5px;text-align:right;">0</div><div class="cell" style="left:760px;top:271px;width:39.5px;text-align:right;">0</div>
<div class="cell" style="left:124px;top:289px;width:144.5px;text-align:right;">225</div><div class="cell" style="left:275px;top:289px;width:39.5px;text-align:right;">0</div><div class="cell" style="left:321px;top:289px;width:39.5px;text-align:right;">0</div><div class="cell" style="left:367px;top:289px;width:38.5px;text-align:right;">0</div><div class="cell" style="left:412px;top:289px;width:39.5px;text-align:right;">1</div><div class="cell" style="left:458px;top:289px;width:40.5px;text-align:right;">1</div><div class="cell" style="left:505px;top:289px;width:44.5px;text-align:right;">0</div><div class="cell" style="left:556px;top:289px;width:44.5px;text-align:right;">0</div><div class="cell" style="left:607px;top:289px;width:44.5px;text-align:right;">0</div><div class="cell" style="left:658px;top:289px;width:44.5px;text-align:right;">0</div><div class="cell" style="left:709px;top:289px;width:44.5px;text-align:right;">0</div><div class="cell" style="left:760px;top:289px;width:39.5px;text-align:right;">0</div>
<div class="cell" style="left:124px;top:307px;width:144.5px;text-align:right;">247.5</div><div class="cell" style="left:275px;top:307px;width:39.5px;text-align:right;">0</div><div class="cell" style="left:321px;top:307px;width:39.5px;text-align:right;">0</div><div class="cell" style="left:367px;top:307px;width:38.5px;text-align:right;">0</div><div class="cell" style="left:412px;top:307px;width:39.5px;text-align:right;">0</div><div class="cell" style="left:458px;top:307px;width:40.5px;text-align:right;">0</div><div class="cell" style="left:505px;top:307px;width:44.5px;text-align:right;">0</div><div class="cell" style="left:556px;top:307px;width:44.5px;text-align:right;">0</div><div class="cell" style="left:607px;top:307px;width:44.5px;text-align:right;">0</div><div class="cell" style="left:658px;top:307px;width:44.5px;text-align:right;">1</div><div class="cell" style="left:709px;top:307px;width:44.5px;text-align:right;">0</div><div class="cell" style="left:760px;top:307px;width:39.5px;text-align:right;">0</div>
<div class="cell" style="left:124px;top:325px;width:144.5px;text-align:right;">270</div><div class="cell" style="left:275px;top:325px;width:39.5px;text-align:right;">0</div><div class="cell" style="left:321px;top:325px;width:39.5px;text-align:right;">0</div><div class="cell" style="left:367px;top:325px;width:38.5px;text-align:right;">1</div><div class="cell" style="left:412px;top:325px;width:39.5px;text-align:right;">0</div><div class="cell" style="left:458px;top:325px;width:40.5px;text-align:right;">1</div><div class="cell" style="left:505px;top:325px;width:44.5px;text-align:right;">0</div><div class="cell" style="left:556px;top:325px;width:44.5px;text-align:right;">0</div><div class="cell" style="left:607px;top:325px;width:44.5px;text-align:right;">0</div><div class="cell" style="left:658px;top:325px;width:44.5px;text-align:right;">1</div><div class="cell" style="left:709px;top:325px;width:44.5px;text-align:right;">0</div><div class="cell" style="left:760px;top:325px;width:39.5px;text-align:right;">0</div>
<div class="cell" style="left:124px;top:343px;width:144.5px;text-align:right;">292.5</div><div class="cell" style="left:275px;top:343px;width:39.5px;text-align:right;">0</div><div class="cell" style="left:321px;top:343px;width:39.5px;text-align:right;">0</div><div class="cell" style="left:367px;top:343px;width:38.5px;text-align:right;">1</div><div class="cell" style="left:412px;top:343px;width:39.5px;text-align:right;">0</div><div class="cell" style="left:458px;top:343px;width:40.5px;text-align:right;">0</div><div class="cell" style="left:505px;top:343px;width:44.5px;text-align:right;">0</div><div class="cell" style="left:556px;top:343px;width:44.5px;text-align:right;">0</div><div class="cell" style="left:607px;top:343px;width:44.5px;text-align:right;">0</div><div class="cell" style="left:658px;top:343px;width:44.5px;text-align:right;">0</div><div class="cell" style="left:709px;top:343px;width:44.5px;text-align:right;">0</div><div class="cell" style="left:760px;top:343px;width:39.5px;text-align:right;">0</div>
<div class="cell" style="left:124px;top:361px;width:144.5px;text-align:right;">315</div><div class="cell" style="left:275px;top:361px;width:39.5px;text-align:right;">0</div><div class="cell" style="left:321px;top:361px;width:39.5px;text-align:right;">0</div><div class="cell" style="left:367px;top:361px;width:38.5px;text-align:right;">0</div><div class="cell" style="left:412px;top:361px;width:39.5px;text-align:right;">0</div><div class="cell" style="left:458px;top:361px;width:40.5px;text-align:right;">0</div><div class="cell" style="left:505px;top:361px;width:44.5px;text-align:right;">1</div><div class="cell" style="left:556px;top:361px;width:44.5px;text-align:right;">1</div><div class="cell" style="left:607px;top:361px;width:44.5px;text-align:right;">0</div><div class="cell" style="left:658px;top:361px;width:44.5px;text-align:right;">0</div><div class="cell" style="left:709px;top:361px;width:44.5px;text-align:right;">0</div><div class="cell" style="left:760px;top:361px;width:39.5px;text-align:right;">0</div>
<div class="cell" style="left:124px;top:379px;width:144.5px;text-align:right;">337.5</div><div class="cell" style="left:275px;top:379px;width:39.5px;text-align:right;">0</div><div class="cell" style="left:321px;top:379px;width:39.5px;text-align:right;">0</div><div class="cell" style="left:367px;top:379px;width:38.5px;text-align:right;">1</div><div class="cell" style="left:412px;top:379px;width:39.5px;text-align:right;">0</div><div class="cell" style="left:458px;top:379px;width:40.5px;text-align:right;">0</div><div class="cell" style="left:505px;top:379px;width:44.5px;text-align:right;">0</div><div class="cell" style="left:556px;top:379px;width:44.5px;text-align:right;">0</div><div class="cell" style="left:607px;top:379px;width:44.5px;text-align:right;">0</div><div class="cell" style="left:658px;top:379px;width:44.5px;text-align:right;">0</div><div class="cell" style="left:709px;top:379px;width:44.5px;text-align:right;">0</div><div class="cell" style="left:760px;top:379px;width:39.5px;text-align:right;">0</div>
<div style="left:846px;top:19px;width:3px;height:90px;background:#000;"></div><div style="left:844px;top:16px;width:6px;height:6px;background:#101010;border:1px solid #888;"></div>
</div>
<div style="left:916px;top:76px;width:5px;height:464px;background:#050505;border-left:1px solid #f0f0f0;"></div><div style="left:918px;top:57px;width:3px;height:19px;background:#fdfdfd;"></div>
<div style="left:921px;top:57px;width:23px;height:483px;background:#e3e4ea;"></div>
<div style="left:70px;top:540px;width:851px;height:17px;background:#c9c9c9;"></div>
<div style="left:921px;top:540px;width:23px;height:26px;background:#e6e7ec;"></div>
<div style="left:898px;top:540px;width:46px;height:17px;background:#e2e3e8;"></div>
<svg style="left:180px;top:540px" width="100" height="17" viewBox="0 0 100 17"><path d="M0 0h96l-9 17H0z" fill="#ffffff"/><path d="M96 0l-9 17" stroke="#101010" stroke-width="1.300"/></svg>
<div style="left:189.500px;top:541px;font-family:'Liberation Mono',monospace;font-weight:bold;font-size:13px;line-height:15px;color:#000;letter-spacing:.3px;">WindRose1</div>
<!-- Graph2 window -->
<div style="left:403px;top:191px;width:494px;height:399px;border-radius:6px 6px 2px 2px;background:linear-gradient(180deg,#aebdd2 0px,#b3cbe6 10px,#b9d3f0 20px,#c3daf3 31px,#bdd5ee 32px,#b6cfe7 100%);border:1px solid #1c222c;box-shadow:inset 0 0 0 1px rgba(255,255,255,.85);"></div>
<div style="left:412px;top:223px;width:477px;height:357px;background:#ffffff;border:1px solid #5c6470;border-right-color:#e8eef6;border-bottom-color:#f4f8fc;"></div>
<div style="left:879px;top:224px;width:9px;height:355px;background:#c6c6c6;"></div>
<svg style="left:413px;top:202px" width="17" height="17" viewBox="0 0 17 17"><rect x="1" y="1" width="14" height="14" fill="#f4f4f4" stroke="#303030" stroke-width="1"/><rect x="2.500" y="2.500" width="11" height="9.500" fill="#30c0c8"/><path d="M3 5.500h10M3 8h10M3 10.500h10" stroke="#106878" stroke-width="1"/><path d="M3 7l3-2 3 1.500 4-2.500" stroke="#e0ffff" stroke-width=".8" fill="none"/><path d="M2 16h14.200V3" stroke="#101010" stroke-width="1.500" fill="none"/><path d="M3 13.500h10" stroke="#fff" stroke-width="1.400" stroke-dasharray="2 1"/></svg>
<div style="left:433.500px;top:202.500px;font-size:11.600px;line-height:16px;color:#0c1838;letter-spacing:-.15px;">Graph2</div>
<div style="left:788px;top:201px;width:31px;height:17px;border-radius:3px;border:1px solid #6f7f96;background:linear-gradient(#d6e3f2 0%,#c2d4ea 45%,#a9c1e0 50%,#b9cfe9 100%);box-shadow:inset 0 0 0 1px rgba(255,255,255,.55);"><div style="left:9px;top:8px;width:11px;height:4px;background:#fdfdfd;border:1px solid #5a6476;border-radius:1px;"></div></div>
<div style="left:822px;top:201px;width:31px;height:17px;border-radius:3px;border:1px solid #6f7f96;background:linear-gradient(#d6e3f2 0%,#c2d4ea 45%,#a9c1e0 50%,#b9cfe9 100%);box-shadow:inset 0 0 0 1px rgba(255,255,255,.55);"><div style="left:10px;top:3px;width:10px;height:8px;background:#fdfdfd;border:1px solid #5a6476;"><div style="left:2px;top:2px;width:4px;height:2px;background:#7f90aa;border:none"></div></div></div>
<div style="left:856px;top:201px;width:32px;height:17px;border-radius:3px;border:1px solid #6c2a20;background:linear-gradient(#e8b0a4 0%,#d98070 45%,#c64a36 50%,#d4705c 100%);box-shadow:inset 0 0 0 1px rgba(255,255,255,.55);"><svg style="left:9px;top:3px" width="13" height="10" viewBox="0 0 13 10"><path d="M3 1.800l7 6.400M10 1.800l-7 6.400" stroke="#6a2a22" stroke-width="4" stroke-linecap="square"/><path d="M3 1.800l7 6.400M10 1.800l-7 6.400" stroke="#ffffff" stroke-width="2.400" stroke-linecap="square"/></svg></div>
<div style="left:413px;top:224px;width:20px;height:20px;background:#c9c9c9;text-align:center;font-weight:bold;font-size:14.500px;line-height:22px;color:#000;">1</div>
<svg style="left:416px;top:246px" width="16" height="17" viewBox="0 0 16 17"><rect x=".5" y=".5" width="15" height="16" rx="3" fill="#e4f6dc" stroke="#48a838"/><path d="M5 8V6a3 3 0 0 1 6 0v2" fill="none" stroke="#186010" stroke-width="1.800"/><rect x="2.500" y="7.500" width="11" height="7.500" rx="1" fill="#28b020" stroke="#0c4c08"/><path d="M6.500 9.300l4 2-4 2z" fill="#083808"/></svg>
<svg style="left:0;top:0" width="944" height="659" viewBox="0 0 944 659" font-family="Liberation Sans, sans-serif"><g fill="none" stroke="#b0b0b0" stroke-width=".75"><circle cx="642.5" cy="399.0" r="10.0"/><circle cx="642.5" cy="399.0" r="20.0"/><circle cx="642.5" cy="399.0" r="30.0"/><circle cx="642.5" cy="399.0" r="40.0"/><circle cx="642.5" cy="399.0" r="50.0"/><circle cx="642.5" cy="399.0" r="60.0"/><circle cx="642.5" cy="399.0" r="70.0"/><circle cx="642.5" cy="399.0" r="80.0"/><circle cx="642.5" cy="399.0" r="90.0"/><circle cx="642.5" cy="399.0" r="100.0"/><circle cx="642.5" cy="399.0" r="110.0"/><circle cx="642.5" cy="399.0" r="120.0"/></g><g stroke="#b0b0b0" stroke-width="1" stroke-dasharray="2 1.500"><path d="M642.5 399.0L642.5 269.0"/><path d="M642.5 399.0L692.2 278.9"/><path d="M642.5 399.0L734.4 307.1"/><path d="M642.5 399.0L762.6 349.3"/><path d="M642.5 399.0L772.5 399.0"/><path d="M642.5 399.0L762.6 448.7"/><path d="M642.5 399.0L734.4 490.9"/><path d="M642.5 399.0L692.2 519.1"/><path d="M642.5 399.0L642.5 529.0"/><path d="M642.5 399.0L592.8 519.1"/><path d="M642.5 399.0L550.6 490.9"/><path d="M642.5 399.0L522.4 448.7"/><path d="M642.5 399.0L512.5 399.0"/><path d="M642.5 399.0L522.4 349.3"/><path d="M642.5 399.0L550.6 307.1"/><path d="M642.5 399.0L592.8 278.9"/></g><circle cx="642.5" cy="399.0" r="130.0" fill="none" stroke="#000" stroke-width="1.100"/><g stroke="#000" stroke-width="1"><path d="M642.5 269.0L642.5 273.0"/><path d="M692.2 278.9L690.7 282.6"/><path d="M734.4 307.1L731.6 309.9"/><path d="M762.6 349.3L758.9 350.8"/><path d="M772.5 399.0L768.5 399.0"/><path d="M762.6 448.7L758.9 447.2"/><path d="M734.4 490.9L731.6 488.1"/><path d="M692.2 519.1L690.7 515.4"/><path d="M642.5 529.0L642.5 525.0"/><path d="M592.8 519.1L594.3 515.4"/><path d="M550.6 490.9L553.4 488.1"/><path d="M522.4 448.7L526.1 447.2"/><path d="M512.5 399.0L516.5 399.0"/><path d="M522.4 349.3L526.1 350.8"/><path d="M550.6 307.1L553.4 309.9"/><path d="M592.8 278.9L594.3 282.6"/></g><g stroke="#000" stroke-width=".9" stroke-linejoin="miter"><path d="M642.50 399.00L636.54 339.30A60.0 60.0 0 0 1 648.46 339.30L642.50 399.00Z" fill="#ff0000"/><path d="M636.54 339.30L634.55 319.40A80.0 80.0 0 0 1 650.45 319.40L648.46 339.30A60.0 60.0 0 0 0 636.54 339.30Z" fill="#0000ff"/><path d="M634.55 319.40L630.58 279.59A120.0 120.0 0 0 1 654.42 279.59L650.45 319.40A80.0 80.0 0 0 0 634.55 319.40Z" fill="#8000ff"/><path d="M642.50 399.00L648.28 379.85A20.0 20.0 0 0 1 651.95 381.37L642.50 399.00Z" fill="#000000"/><path d="M642.50 399.00L667.84 368.05A40.0 40.0 0 0 1 673.45 373.66L642.50 399.00Z" fill="#ff0000"/><path d="M667.84 368.05L680.50 352.57A60.0 60.0 0 0 1 688.93 361.00L673.45 373.66A40.0 40.0 0 0 0 667.84 368.05Z" fill="#008000"/><path d="M642.50 399.00L660.13 389.55A20.0 20.0 0 0 1 661.65 393.22L642.50 399.00Z" fill="#0000ff"/><path d="M642.50 399.00L662.40 397.01A20.0 20.0 0 0 1 662.40 400.99L642.50 399.00Z" fill="#008080"/><path d="M642.50 399.00L661.65 404.78A20.0 20.0 0 0 1 660.13 408.45L642.50 399.00Z" fill="#000000"/><path d="M642.50 399.00L673.45 424.34A40.0 40.0 0 0 1 667.84 429.95L642.50 399.00Z" fill="#00ffff"/><path d="M673.45 424.34L688.93 437.00A60.0 60.0 0 0 1 680.50 445.43L667.84 429.95A40.0 40.0 0 0 0 673.45 424.34Z" fill="#800080"/><path d="M642.50 399.00L651.95 416.63A20.0 20.0 0 0 1 648.28 418.15L642.50 399.00Z" fill="#ff0000"/><path d="M651.95 416.63L661.40 434.25A40.0 40.0 0 0 1 654.06 437.29L648.28 418.15A20.0 20.0 0 0 0 651.95 416.63Z" fill="#00ffff"/><path d="M661.40 434.25L670.85 451.88A60.0 60.0 0 0 1 659.84 456.44L654.06 437.29A40.0 40.0 0 0 0 661.40 434.25Z" fill="#ff00ff"/><path d="M670.85 451.88L680.30 469.50A80.0 80.0 0 0 1 665.62 475.59L659.84 456.44A60.0 60.0 0 0 0 670.85 451.88Z" fill="#808000"/><path d="M642.50 399.00L644.49 418.90A20.0 20.0 0 0 1 640.51 418.90L642.50 399.00Z" fill="#ffff80"/><path d="M644.49 418.90L646.47 438.80A40.0 40.0 0 0 1 638.53 438.80L640.51 418.90A20.0 20.0 0 0 0 644.49 418.90Z" fill="#008080"/><path d="M642.50 399.00L629.83 414.48A20.0 20.0 0 0 1 627.02 411.67L642.50 399.00Z" fill="#0000ff"/><path d="M629.83 414.48L617.16 429.95A40.0 40.0 0 0 1 611.55 424.34L627.02 411.67A20.0 20.0 0 0 0 629.83 414.48Z" fill="#008000"/><path d="M642.50 399.00L624.87 408.45A20.0 20.0 0 0 1 623.35 404.78L642.50 399.00Z" fill="#800080"/><path d="M642.50 399.00L622.60 400.99A20.0 20.0 0 0 1 622.60 397.01L642.50 399.00Z" fill="#ff0000"/><path d="M622.60 400.99L602.70 402.97A40.0 40.0 0 0 1 602.70 395.03L622.60 397.01A20.0 20.0 0 0 0 622.60 400.99Z" fill="#008000"/><path d="M602.70 402.97L582.80 404.96A60.0 60.0 0 0 1 582.80 393.04L602.70 395.03A40.0 40.0 0 0 0 602.70 402.97Z" fill="#800080"/><path d="M642.50 399.00L623.35 393.22A20.0 20.0 0 0 1 624.87 389.55L642.50 399.00Z" fill="#ff0000"/><path d="M642.50 399.00L627.02 386.33A20.0 20.0 0 0 1 629.83 383.52L642.50 399.00Z" fill="#00ffff"/><path d="M627.02 386.33L611.55 373.66A40.0 40.0 0 0 1 617.16 368.05L629.83 383.52A20.0 20.0 0 0 0 627.02 386.33Z" fill="#ff00ff"/><path d="M642.50 399.00L633.05 381.37A20.0 20.0 0 0 1 636.72 379.85L642.50 399.00Z" fill="#ff0000"/></g><g font-size="10.500" fill="#202020" text-anchor="middle" letter-spacing=".9"><text x="642.5" y="260.7">N</text><text x="705.0" y="270.7">NNE</text><text x="745.5" y="300.7">NE</text><text x="778.0" y="344.4">ENE</text><text x="780.5" y="402.7">E</text><text x="778.0" y="460.8">ESE</text><text x="745.5" y="504.5">SE</text><text x="705.0" y="534.2">SSE</text><text x="642.5" y="543.7">S</text><text x="578.5" y="534.2">SSW</text><text x="537.2" y="504.5">SW</text><text x="502.4" y="460.8">WSW</text><text x="501.9" y="402.7">W</text><text x="502.4" y="344.4">WNW</text><text x="537.2" y="300.7">NW</text><text x="578.0" y="270.7">NNW</text></g><path d="M473.5 269.0V529.0" stroke="#000" stroke-width="1.200"/><g stroke="#000" stroke-width="1.100"><path d="M468.5 269.0H473.5"/><path d="M468.5 279.0H473.5"/><path d="M468.5 289.0H473.5"/><path d="M468.5 299.0H473.5"/><path d="M468.5 309.0H473.5"/><path d="M468.5 319.0H473.5"/><path d="M468.5 329.0H473.5"/><path d="M468.5 339.0H473.5"/><path d="M468.5 349.0H473.5"/><path d="M468.5 359.0H473.5"/><path d="M468.5 369.0H473.5"/><path d="M468.5 379.0H473.5"/><path d="M468.5 389.0H473.5"/><path d="M468.5 399.0H473.5"/><path d="M468.5 409.0H473.5"/><path d="M468.5 419.0H473.5"/><path d="M468.5 429.0H473.5"/><path d="M468.5 439.0H473.5"/><path d="M468.5 449.0H473.5"/><path d="M468.5 459.0H473.5"/><path d="M468.5 469.0H473.5"/><path d="M468.5 479.0H473.5"/><path d="M468.5 489.0H473.5"/><path d="M468.5 499.0H473.5"/><path d="M468.5 509.0H473.5"/><path d="M468.5 519.0H473.5"/><path d="M468.5 529.0H473.5"/></g><g font-size="11" fill="#000" text-anchor="end"><text x="465.0" y="272.9">6.5</text><text x="465.0" y="282.9">6.0</text><text x="465.0" y="292.9">5.5</text><text x="465.0" y="302.9">5.0</text><text x="465.0" y="312.9">4.5</text><text x="465.0" y="322.9">4.0</text><text x="465.0" y="332.9">3.5</text><text x="465.0" y="342.9">3.0</text><text x="465.0" y="352.9">2.5</text><text x="465.0" y="362.9">2.0</text><text x="465.0" y="372.9">1.5</text><text x="465.0" y="382.9">1.0</text><text x="465.0" y="392.9">0.5</text><text x="465.0" y="402.9">0.0</text><text x="465.0" y="412.9">0.5</text><text x="465.0" y="422.9">1.0</text><text x="465.0" y="432.9">1.5</text><text x="465.0" y="442.9">2.0</text><text x="465.0" y="452.9">2.5</text><text x="465.0" y="462.9">3.0</text><text x="465.0" y="472.9">3.5</text><text x="465.0" y="482.9">4.0</text><text x="465.0" y="492.9">4.5</text><text x="465.0" y="502.9">5.0</text><text x="465.0" y="512.9">5.5</text><text x="465.0" y="522.9">6.0</text><text x="465.0" y="532.9">6.5</text></g><rect x="791.5" y="234.5" width="70" height="179" fill="#fff" stroke="#000" stroke-width="1"/><g font-size="12" fill="#000"><rect x="793.5" y="235.00" width="26" height="14" fill="#8000ff" stroke="#000" stroke-width="1"/><text x="822" y="246.00">Calm</text><rect x="793.5" y="249.92" width="26" height="14" fill="#ff8000" stroke="#000" stroke-width="1"/><text x="822" y="260.92">&gt;= 20</text><rect x="793.5" y="264.84" width="26" height="14" fill="#008080" stroke="#000" stroke-width="1"/><text x="822" y="275.84">18 - 20</text><rect x="793.5" y="279.76" width="26" height="14" fill="#800080" stroke="#000" stroke-width="1"/><text x="822" y="290.76">16 - 18</text><rect x="793.5" y="294.68" width="26" height="14" fill="#808000" stroke="#000" stroke-width="1"/><text x="822" y="305.68">14 - 16</text><rect x="793.5" y="309.60" width="26" height="14" fill="#ff00ff" stroke="#000" stroke-width="1"/><text x="822" y="320.60">12 - 14</text><rect x="793.5" y="324.52" width="26" height="14" fill="#00ffff" stroke="#000" stroke-width="1"/><text x="822" y="335.52">10 - 12</text><rect x="793.5" y="339.44" width="26" height="14" fill="#008000" stroke="#000" stroke-width="1"/><text x="822" y="350.44">8 - 10</text><rect x="793.5" y="354.36" width="26" height="14" fill="#0000ff" stroke="#000" stroke-width="1"/><text x="822" y="365.36">6 - 8</text><rect x="793.5" y="369.28" width="26" height="14" fill="#ff0000" stroke="#000" stroke-width="1"/><text x="822" y="380.28">4 - 6</text><rect x="793.5" y="384.20" width="26" height="14" fill="#ffff00" stroke="#000" stroke-width="1"/><text x="822" y="395.20">2 - 4</text><rect x="793.5" y="399.12" width="26" height="14" fill="#000000" stroke="#000" stroke-width="1"/><text x="822" y="410.12">0 - 2</text></g></svg>
<!-- bottom -->
<div style="left:41px;top:588px;width:60px;height:29px;background:linear-gradient(#e2e9f2,#d3dde9);border:1px solid #7c8490;border-radius:6px 0 0 0;"></div>
<svg style="left:44px;top:593px" width="18" height="18" viewBox="0 0 17 17"><rect x="1" y="1" width="14" height="14" fill="#f4f4f4" stroke="#303030" stroke-width="1"/><rect x="2.500" y="2.500" width="11" height="9.500" fill="#30c0c8"/><path d="M3 5.500h10M3 8h10M3 10.500h10" stroke="#106878" stroke-width="1"/><path d="M2 16h14.200V3" stroke="#101010" stroke-width="1.500" fill="none"/></svg>
<div style="left:65px;top:594px;font-size:13px;line-height:16px;color:#a9b1bb;">Graph1</div>
<div style="left:0;top:616px;width:944px;height:28px;background:linear-gradient(#f0f0f5 0%,#e2e2ea 25%,#c8c8d6 60%,#b2b2c4 92%,#dcdce6 100%);border-top:1px solid #f8f8fb;"></div>
<div style="left:0;top:644px;width:944px;height:15px;background:#f1f1f1;border-top:1px solid #fdfdfd;"></div>
<div style="left:76px;top:620px;width:26px;height:22px;background:linear-gradient(#e9ecf2,#d4dae6);border:1px solid #6e7688;border-radius:2px;"></div>
<svg style="left:0;top:617px" width="944" height="29" viewBox="0 618 944 29"><defs><linearGradient id="capb" x1="0" y1="0" x2="0" y2="1"><stop offset="0" stop-color="#ececf2"/><stop offset=".6" stop-color="#d0d0dc"/><stop offset="1" stop-color="#e6e6ee"/></linearGradient></defs><path d="M-2 630l6-6h9v9l-6 7h-9z" fill="#e6e6ee" stroke="#7c7c8a" stroke-width="1.100"/><path d="M-2 630h9v10M7 630l6-6" fill="none" stroke="#7c7c8a" stroke-width="1"/><path d="M18 641h-4l4-4z" fill="#7c7c8a"/><path d="M27 632q4-7 14-8" fill="none" stroke="#101010" stroke-width="1.600" stroke-dasharray="2 2"/><rect x="26.0" y="631" width="2.200" height="9" fill="#1030d0"/><rect x="29.2" y="633" width="2.200" height="7" fill="#1030d0"/><rect x="32.4" y="635" width="2.200" height="5" fill="#1030d0"/><rect x="35.6" y="636" width="2.200" height="4" fill="#1030d0"/><rect x="38.8" y="637" width="2.200" height="3" fill="#1030d0"/><path d="M46 641h-4l4-4z" fill="#7c7c8a"/><path d="M52 640v-12l5 6 4-7 4 7 4-5v11z" fill="#101010"/><path d="M54 640l4-6 3 3 3-5 4 8z" fill="#d02020"/><path d="M59 634l2-5 3 5z" fill="#20a040"/><circle cx="87" cy="631" r="8" fill="#fff" stroke="#202020" stroke-width="1.300"/><path d="M87 631L85.5 624.2L88.5 624.2Z" fill="#e02020"/><path d="M87 631L92.2 626.3L93.7 628.8Z" fill="#d040d0"/><path d="M87 631L93.7 633.2L92.2 635.7Z" fill="#40c0c0"/><path d="M87 631L88.5 637.8L85.5 637.8Z" fill="#e02020"/><path d="M87 631L81.8 635.7L80.3 633.2Z" fill="#40c0c0"/><path d="M87 631L80.3 628.8L81.8 626.3Z" fill="#d040d0"/><path d="M100 640h-4l4-4z" fill="#7c7c8a"/><rect x="108" y="627" width="3" height="9" fill="#fff" stroke="#101010"/><rect x="113.500" y="627" width="4.500" height="10" fill="#e02020" stroke="#c01010"/><path d="M115.700 622v5M115.700 637v4" stroke="#c01010" stroke-width="1.300"/><path d="M124 641h-4l4-4z" fill="#7c7c8a"/><path d="M130 631l6-6h9v9l-6 7h-9z" fill="#c8c8d2" stroke="#7c7c8a" stroke-width="1.100"/><path d="M130 631h9v10M139 631l6-6" fill="none" stroke="#7c7c8a" stroke-width="1"/><path d="M133 632v8M136 630v10M140 628v9M142.5 627v8" stroke="#7c7c8a" stroke-width="1"/><rect x="150" y="617" width="11" height="29" fill="url(#capb)"/><rect x="161" y="617" width="3" height="29" fill="#eeeef4"/><rect x="152.5" y="634" width="6" height="1.500" fill="#181818"/><path d="M152.5 637h6l-3 3z" fill="#181818"/><rect x="166" y="623" width="2" height="2" fill="#f6f6fa"/><rect x="165.4" y="622.4" width="1.600" height="1.600" fill="#8c8c9c"/><rect x="166" y="627" width="2" height="2" fill="#f6f6fa"/><rect x="165.4" y="626.4" width="1.600" height="1.600" fill="#8c8c9c"/><rect x="166" y="631" width="2" height="2" fill="#f6f6fa"/><rect x="165.4" y="630.4" width="1.600" height="1.600" fill="#8c8c9c"/><rect x="166" y="635" width="2" height="2" fill="#f6f6fa"/><rect x="165.4" y="634.4" width="1.600" height="1.600" fill="#8c8c9c"/><rect x="166" y="639" width="2" height="2" fill="#f6f6fa"/><rect x="165.4" y="638.4" width="1.600" height="1.600" fill="#8c8c9c"/><path d="M175 630l6-6h9v9l-6 7h-9z" fill="#e6e6ee" stroke="#7c7c8a" stroke-width="1.100"/><path d="M175 630h9v10M184 630l6-6" fill="none" stroke="#7c7c8a" stroke-width="1"/><path d="M178 631v8M181 629v10M185 627v9M187.5 626v8" stroke="#7c7c8a" stroke-width="1"/><path d="M196 641h-4l4-4z" fill="#7c7c8a"/><path d="M202.500 621v20" stroke="#a4a4b4"/><path d="M203.500 621v20" stroke="#f0f0f6"/><path d="M209 630l6-6h9v9l-6 7h-9z" fill="#e6e6ee" stroke="#7c7c8a" stroke-width="1.100"/><path d="M209 630h9v10M218 630l6-6" fill="none" stroke="#7c7c8a" stroke-width="1"/><path d="M210 630l6-6h8l-6 6z" fill="#9c9cac"/><path d="M210 632h8M210 634.5h8M210 637h8" stroke="#b4b4c2" stroke-width="1"/><path d="M229 641h-4l4-4z" fill="#7c7c8a"/><path d="M235 630l6-6h9v9l-6 7h-9z" fill="#e6e6ee" stroke="#7c7c8a" stroke-width="1.100"/><path d="M235 630h9v10M244 630l6-6" fill="none" stroke="#7c7c8a" stroke-width="1"/><rect x="237.2" y="632.2" width="1.800" height="1.800" fill="#606070"/><rect x="240.2" y="636.2" width="1.800" height="1.800" fill="#606070"/><rect x="242.2" y="626.2" width="1.800" height="1.800" fill="#606070"/><rect x="246.2" y="626.2" width="1.800" height="1.800" fill="#606070"/><rect x="246.2" y="631.2" width="1.800" height="1.800" fill="#606070"/><path d="M255 641h-4l4-4z" fill="#7c7c8a"/><circle cx="270" cy="632" r="7.500" fill="#ecf4ec" stroke="#303830" stroke-width="1.200"/><path d="M270 632l5.500-5.500a7.500 7.500 0 0 1 -4 13l-6.500-3z" fill="#30c048"/><path d="M270 632l5.500-5.500M270 632l-6.500 4.500" stroke="#186028" stroke-width=".8"/><path d="M262.500 622v19" stroke="#202020" stroke-width="1.300" stroke-dasharray="1.500 1.500"/><text x="268" y="628" font-size="8" font-family="Liberation Sans,sans-serif" fill="#101010">r</text><path d="M282 641h-4l4-4z" fill="#7c7c8a"/><rect x="288" y="630" width="16" height="10" fill="#a8a8b6" stroke="#7c7c8a"/><path d="M288 630l3-5 3 4 3-5 3 5 4-4" fill="none" stroke="#7c7c8a" stroke-width="1.200"/><path d="M292 634v6M296 634v6M300 634v6" stroke="#e8e8ee"/><path d="M308 641h-4l4-4z" fill="#7c7c8a"/><rect x="313.500" y="623.500" width="16" height="16" fill="#a4a4b2" stroke="#7c7c8a"/><rect x="334" y="617" width="11" height="29" fill="url(#capb)"/><rect x="345" y="617" width="3" height="29" fill="#eeeef4"/><rect x="336.5" y="634" width="6" height="1.500" fill="#181818"/><path d="M336.5 637h6l-3 3z" fill="#181818"/><rect x="350" y="623" width="2" height="2" fill="#f6f6fa"/><rect x="349.4" y="622.4" width="1.600" height="1.600" fill="#8c8c9c"/><rect x="350" y="627" width="2" height="2" fill="#f6f6fa"/><rect x="349.4" y="626.4" width="1.600" height="1.600" fill="#8c8c9c"/><rect x="350" y="631" width="2" height="2" fill="#f6f6fa"/><rect x="349.4" y="630.4" width="1.600" height="1.600" fill="#8c8c9c"/><rect x="350" y="635" width="2" height="2" fill="#f6f6fa"/><rect x="349.4" y="634.4" width="1.600" height="1.600" fill="#8c8c9c"/><rect x="350" y="639" width="2" height="2" fill="#f6f6fa"/><rect x="349.4" y="638.4" width="1.600" height="1.600" fill="#8c8c9c"/><path d="M359 624.500l3 2.500h8l3-2.500v9q0 5-7 5t-7-5z" fill="#dcdce6" stroke="#7c7c8a" stroke-width="1.100"/><circle cx="363.5" cy="630.500" r="1" fill="#606070"/><circle cx="368.5" cy="630.500" r="1" fill="#606070"/><path d="M363 634.500q3 2 6 0" fill="none" stroke="#606070"/><path d="M358 640h16" stroke="#7c7c8a" stroke-width="1.400" stroke-dasharray="3 1.500"/><path d="M381 624.500l3 2.500h8l3-2.500v9q0 5-7 5t-7-5z" fill="#c4c4d0" stroke="#7c7c8a" stroke-width="1.100"/><circle cx="385.5" cy="630.500" r="1" fill="#606070"/><circle cx="390.5" cy="630.500" r="1" fill="#606070"/><path d="M385 634.500q3 2 6 0" fill="none" stroke="#606070"/><path d="M380 640h16" stroke="#7c7c8a" stroke-width="1.400" stroke-dasharray="3 1.500"/><path d="M403.500 621v20M477.500 621v20" stroke="#a4a4b4"/><path d="M404.500 621v20M478.500 621v20" stroke="#f0f0f6"/><path d="M411.500 625.500h12v7q0 7-6 7t-6-7z" fill="#b4b4c2" stroke="#7c7c8a" stroke-width="1.100"/><circle cx="415" cy="630.500" r="1.100" fill="#505060"/><circle cx="420" cy="630.500" r="1.100" fill="#505060"/><path d="M414.500 634.500q3 2.500 6 0" fill="none" stroke="#505060"/><rect x="432.0" y="628.0" width="2.300" height="2.300" fill="#a4a4b0"/><rect x="435.5" y="628.0" width="2.300" height="2.300" fill="#a4a4b0"/><rect x="439.0" y="628.0" width="2.300" height="2.300" fill="#a4a4b0"/><rect x="432.0" y="631.5" width="2.300" height="2.300" fill="#303030"/><rect x="435.5" y="631.5" width="2.300" height="2.300" fill="#303030"/><rect x="439.0" y="631.5" width="2.300" height="2.300" fill="#303030"/><rect x="432.0" y="635.0" width="2.300" height="2.300" fill="#a4a4b0"/><rect x="435.5" y="635.0" width="2.300" height="2.300" fill="#a4a4b0"/><rect x="439.0" y="635.0" width="2.300" height="2.300" fill="#a4a4b0"/><path d="M445.5 625v15M443.3 627.500l2.200-2.500 2.200 2.500M443.3 637.500l2.200 2.500 2.200-2.500" fill="none" stroke="#303038" stroke-width="1.100"/><rect x="454.0" y="628.0" width="2.300" height="2.300" fill="#d02030"/><rect x="457.5" y="628.0" width="2.300" height="2.300" fill="#d02030"/><rect x="461.0" y="628.0" width="2.300" height="2.300" fill="#d02030"/><rect x="454.0" y="631.5" width="2.300" height="2.300" fill="#303030"/><rect x="457.5" y="631.5" width="2.300" height="2.300" fill="#303030"/><rect x="461.0" y="631.5" width="2.300" height="2.300" fill="#303030"/><rect x="454.0" y="635.0" width="2.300" height="2.300" fill="#d02030"/><rect x="457.5" y="635.0" width="2.300" height="2.300" fill="#d02030"/><rect x="461.0" y="635.0" width="2.300" height="2.300" fill="#d02030"/><path d="M467.5 625v15M465.3 627.500l2.200-2.500 2.200 2.500M465.3 637.500l2.200 2.500 2.200-2.500" fill="none" stroke="#303038" stroke-width="1.100"/><rect x="484.0" y="628.0" width="2.300" height="2.300" fill="#d02030"/><rect x="487.5" y="628.0" width="2.300" height="2.300" fill="#d02030"/><rect x="491.0" y="628.0" width="2.300" height="2.300" fill="#d02030"/><rect x="484.0" y="631.5" width="2.300" height="2.300" fill="#303030"/><rect x="487.5" y="631.5" width="2.300" height="2.300" fill="#303030"/><rect x="491.0" y="631.5" width="2.300" height="2.300" fill="#303030"/><rect x="484.0" y="635.0" width="2.300" height="2.300" fill="#d02030"/><rect x="487.5" y="635.0" width="2.300" height="2.300" fill="#d02030"/><rect x="491.0" y="635.0" width="2.300" height="2.300" fill="#d02030"/><path d="M497.5 625v15M495.3 627.500l2.200-2.500 2.200 2.500M495.3 637.500l2.200 2.500 2.200-2.500" fill="none" stroke="#303038" stroke-width="1.100"/><rect x="505" y="617" width="11" height="29" fill="url(#capb)"/><rect x="516" y="617" width="3" height="29" fill="#eeeef4"/><rect x="507.5" y="634" width="6" height="1.500" fill="#181818"/><path d="M507.5 637h6l-3 3z" fill="#181818"/><rect x="521" y="623" width="2" height="2" fill="#f6f6fa"/><rect x="520.4" y="622.4" width="1.600" height="1.600" fill="#8c8c9c"/><rect x="521" y="627" width="2" height="2" fill="#f6f6fa"/><rect x="520.4" y="626.4" width="1.600" height="1.600" fill="#8c8c9c"/><rect x="521" y="631" width="2" height="2" fill="#f6f6fa"/><rect x="520.4" y="630.4" width="1.600" height="1.600" fill="#8c8c9c"/><rect x="521" y="635" width="2" height="2" fill="#f6f6fa"/><rect x="520.4" y="634.4" width="1.600" height="1.600" fill="#8c8c9c"/><rect x="521" y="639" width="2" height="2" fill="#f6f6fa"/><rect x="520.4" y="638.4" width="1.600" height="1.600" fill="#8c8c9c"/><g transform="rotate(0 537 632)"><path d="M534 624h6v8h3l-6 7-6-7h3z" fill="#a8a8b8" stroke="#7c7c8a" stroke-width="1"/></g><g transform="rotate(0 559 632)"><path d="M556 624h6v8h3l-6 7-6-7h3z" fill="#a8a8b8" stroke="#7c7c8a" stroke-width="1"/></g><g transform="rotate(15 581 632)"><path d="M578 624h6v8h3l-6 7-6-7h3z" fill="#a8a8b8" stroke="#7c7c8a" stroke-width="1"/></g><path d="M595 631h6M599 628l3 3-3 3" stroke="#7c7c8a" stroke-width="1.200" fill="none"/><path d="M604 625l7 1-2 14-7-1z" fill="#9c9cac" stroke="#7c7c8a"/><path d="M621 626h8l3 13h-14z" fill="#9c9cac" stroke="#7c7c8a"/><path d="M619 636h12" stroke="#e0e0e8"/><path d="M640 626h14l-3 13h-8z" fill="#9c9cac" stroke="#7c7c8a"/></svg>
<div style="left:-1px;top:650px;width:300px;height:14px;font-size:12px;line-height:14px;color:#101010;white-space:nowrap;letter-spacing:-.36px;">s as Wind Rose binned</div>
<div style="left:667px;top:651px;width:277px;letter-spacing:-.1px;height:14px;font-size:12px;line-height:14px;color:#101010;white-space:nowrap;overflow:hidden;">-- <span style="display:inline-block;width:8px;height:8px;background:#b01818;vertical-align:-1px;"></span> AU : ON&nbsp; Dark Colors &amp; Light Grids&nbsp; 1:[Book1]WindRose1</div>
<!-- popup menu -->
<div style="left:75px;top:367px;width:162px;height:248px;background:#fbfbfb;border:1px solid #a0a0a0;box-shadow:2px 2px 3px rgba(0,0,0,.35);"></div>
<div style="left:79px;top:416px;width:154px;height:21px;border:1px solid #a8d0ee;border-radius:3px;background:linear-gradient(#f2f8fd,#d8eafa);"></div>
<div class="menu-item" style="top:371px;font-size:11.6px;letter-spacing:-0.49px;">Polar theta(X) r(Y)</div>
<div class="menu-item" style="top:393px;font-size:11.6px;letter-spacing:-0.45px;">Polar r(X) theta(Y)</div>
<div class="menu-item" style="top:415px;font-size:11.6px;letter-spacing:-0.05px;">Wind Rose - Binned Data</div>
<div class="menu-item" style="top:437px;font-size:11.6px;letter-spacing:-0.19px;">Wind Rose - Raw Data</div>
<div class="menu-item" style="top:459px;font-size:11.6px;letter-spacing:-0.49px;">Ternary</div>
<div class="menu-item" style="top:481px;font-size:11.6px;letter-spacing:-0.35px;">Piper</div>
<div class="menu-item" style="top:503px;font-size:11.6px;letter-spacing:-0.21px;">Smith Chart</div>
<div class="menu-item" style="top:525px;font-size:11.6px;letter-spacing:-0.49px;">Radar</div>
<div class="menu-item" style="top:547px;font-size:11.6px;letter-spacing:-0.66px;">Vector XYAM</div>
<div class="menu-item" style="top:569px;font-size:11.6px;letter-spacing:-0.89px;">Vector &nbsp;XYXY</div>
<div class="menu-item" style="top:591px;font-size:11.6px;letter-spacing:-0.30px;">Zoom</div>
<svg style="left:76px;top:367px" width="30" height="248" viewBox="76 367 30 248"><path d="M81.500 374v16" stroke="#101010" stroke-width="1.200"/><path d="M79 376h2.500M79 380h2.500M79 384h2.500M79 388h2.500" stroke="#101010" stroke-width="1"/><circle cx="89.500" cy="382" r="6.500" fill="#fff" stroke="#101010" stroke-width="1.200"/><text x="89.500" y="385" font-size="9" text-anchor="middle" font-family="Liberation Sans,sans-serif" fill="#101010">r</text><path d="M81.500 396v16" stroke="#101010" stroke-width="1.200"/><path d="M79 398h2.500M79 402h2.500M79 406h2.500M79 410h2.500" stroke="#101010" stroke-width="1"/><circle cx="89.500" cy="404" r="6.500" fill="#fff" stroke="#101010" stroke-width="1.200"/><text x="89.500" y="407" font-size="9" text-anchor="middle" font-family="Liberation Sans,sans-serif" fill="#101010">θ</text><circle cx="88" cy="426" r="8" fill="#fff" stroke="#202020" stroke-width="1.300"/><path d="M88 426L86.5 419.2L89.5 419.2Z" fill="#e02020"/><path d="M88 426L93.2 421.3L94.7 423.8Z" fill="#d040d0"/><path d="M88 426L94.7 428.2L93.2 430.7Z" fill="#40c0c0"/><path d="M88 426L89.5 432.8L86.5 432.8Z" fill="#e02020"/><path d="M88 426L82.8 430.7L81.3 428.2Z" fill="#40c0c0"/><path d="M88 426L81.3 423.8L82.8 421.3Z" fill="#d040d0"/><circle cx="88" cy="448" r="8" fill="#fff" stroke="#202020" stroke-width="1.300"/><path d="M88 448L86.5 441.2L89.5 441.2Z" fill="#20b030"/><path d="M88 448L93.2 443.3L94.7 445.8Z" fill="#20b030"/><path d="M88 448L94.7 450.2L93.2 452.7Z" fill="#40c0c0"/><path d="M88 448L89.5 454.8L86.5 454.8Z" fill="#e02020"/><path d="M88 448L82.8 452.7L81.3 450.2Z" fill="#20b030"/><path d="M88 448L81.3 445.8L82.8 443.3Z" fill="#20b030"/><path d="M88 462L96 477H80Z" fill="#fff" stroke="#101010" stroke-width="1.200"/><rect x="87.2" y="466.2" width="1.600" height="1.600" fill="#2020a0"/><rect x="85.2" y="470.2" width="1.600" height="1.600" fill="#2020a0"/><rect x="89.2" y="470.2" width="1.600" height="1.600" fill="#2020a0"/><rect x="83.2" y="474.2" width="1.600" height="1.600" fill="#2020a0"/><rect x="87.2" y="474.2" width="1.600" height="1.600" fill="#2020a0"/><rect x="91.2" y="474.2" width="1.600" height="1.600" fill="#2020a0"/><path d="M88 483L93 492H83Z" fill="#f0e040" stroke="#101010"/><path d="M83 492L88 500H78Z" fill="#f0e040" stroke="#101010"/><path d="M93 492L98 500H88Z" fill="#f0e040" stroke="#101010"/><circle cx="88" cy="514" r="7.500" fill="#e8eeff" stroke="#202080" stroke-width="1.300"/><circle cx="91.500" cy="514" r="4" fill="none" stroke="#202080"/><path d="M80.500 514H95.500M95.500 514Q88 505 82 510M95.500 514Q88 523 82 518" fill="none" stroke="#202080"/><polygon points="88.0,528.0 95.6,533.5 92.7,542.5 83.3,542.5 80.4,533.5" fill="#ffe8e8" stroke="#303030" stroke-width="1.100"/><polygon points="88.0,532.0 92.3,535.1 90.6,540.1 85.4,540.1 83.7,535.1" fill="#f8b0b0" stroke="#c02020" stroke-width="1"/><g stroke="#2020a0" stroke-width="1.100" fill="#2020a0"><path d="M80 551l4 4M86 557l6-6M80 564l3-4M92 558l2 7"/><path d="M79 550h3l-3 3zM93 550v3l-3-3zM79 566v-3l3 3zM95 566h-3l2-3z" stroke="none"/></g><g stroke="#5030c0" stroke-width="1.100" fill="#5030c0"><path d="M80 579l8-7M83 587l10-8"/><path d="M90 571v3l-3-3zM95 578v3l-3-3zM79 581h3l-3-3zM82 589h3l-3-3z" stroke="none"/></g><path d="M80 576l2-2M92 585l2-2" stroke="#d040a0" stroke-width="1"/><rect x="80" y="601" width="16" height="9" fill="#40d0d8" stroke="#101010"/><rect x="84" y="595" width="7" height="5" fill="#40d0d8" stroke="#101010"/><path d="M80 594v6M93 595h1M95 597h1M93 599h1" stroke="#101010"/><path d="M82 605h12" stroke="#106070"/></svg>
<!-- overlays -->
<div style="left:880px;top:66px;width:45px;height:122px;border:3px solid #d9453d;"></div>
<div style="left:769px;top:223px;width:98px;height:34px;border:3px solid #d9453d;"></div>
<div style="left:73px;top:411px;width:166px;height:33px;border:3px solid #d9453d;"></div>
<div style="left:70px;top:613px;width:39px;height:36px;border:3px solid #d9453d;"></div>
<svg style="left:0;top:0" width="944" height="659" viewBox="0 0 944 659"><path d="M238 424.500L469 379.800L467.300 372.500L493 379L470.600 391.500L469.900 385.200L238 426.500Z" fill="#800080"/></svg>
<svg style="left:540px;top:585px" width="120" height="50" viewBox="540 585 120 50"><g fill="#ffffff" fill-opacity=".9" stroke="#9a9a9a" stroke-opacity=".55" stroke-width="1"><path d="M565.500 592c8.800 0 15.800 6.200 15.800 13.800c0 7.600-7 13.800-15.800 13.800c-1.800 0-3.600-.3-5.200-.8l-5.300 2.900l1.500-4.900c-4.100-2.500-6.800-6.500-6.800-11c0-7.600 7-13.800 15.800-13.800z"/><path d="M581.300 604.700c8 0 14.500 5.800 14.500 13c0 4-2.100 7.600-5.300 10l1.300 4.300l-4.700-2.500c-1.800.7-3.800 1.100-5.800 1.100c-8 0-14.500-5.800-14.500-13c0-7.100 6.500-12.900 14.500-12.900z"/></g><g fill="#9c9c9c"><circle cx="559.500" cy="601.800" r="1.800"/><circle cx="572" cy="601.800" r="1.800"/><circle cx="576" cy="612.500" r="1.700"/><circle cx="586.500" cy="612.500" r="1.700"/></g></svg>
<div style="left:602px;top:590px;width:60px;height:36px;font-family:'Liberation Sans','Noto Sans CJK SC',sans-serif;font-size:28.500px;line-height:36px;white-space:nowrap;color:rgba(255,255,255,.62);text-shadow:1px 1px 1px rgba(70,70,70,.55),-0.500px -0.500px 0 rgba(120,120,120,.4);letter-spacing:-1px;">微信</div>
<div style="left:655px;top:571px;width:284px;height:82px;background:#ffffff;"></div>
<svg style="left:655px;top:571px" width="122" height="82" viewBox="655 571 122 82"><g fill="#df2a1d"><rect x="656" y="571" width="10.500" height="82"/><rect x="656" y="571" width="33.500" height="9.500"/><path d="M684.800 571H698.500L706 597L726.500 571H742V580L711 611.500H695Z"/><rect x="694" y="611" width="11" height="42"/><rect x="732.300" y="571" width="9.700" height="82"/><rect x="766.200" y="571" width="9.600" height="82"/><rect x="741" y="600.600" width="26" height="10.200"/></g><rect x="655" y="611.300" width="122" height="1.500" fill="#fff" fill-opacity=".92"/></svg>
<div style="left:790px;top:572px;width:150px;height:38px;font-family:'Liberation Sans','Noto Sans CJK SC',sans-serif;font-size:28.500px;line-height:38px;white-space:nowrap;color:#2c2c2c;letter-spacing:1.100px;">中国煤化工</div>
<div style="left:791px;top:610px;width:147px;height:3px;background:#d8443e;"></div>
<div style="left:791px;top:615px;width:150px;height:34px;font-size:29px;line-height:34px;white-space:nowrap;color:#6a6a6a;letter-spacing:9.500px;">CNMHG</div>
<div style="left:939px;top:571px;width:5px;height:75px;background:#a9a9a9;"></div>
</div>
</body></html>
